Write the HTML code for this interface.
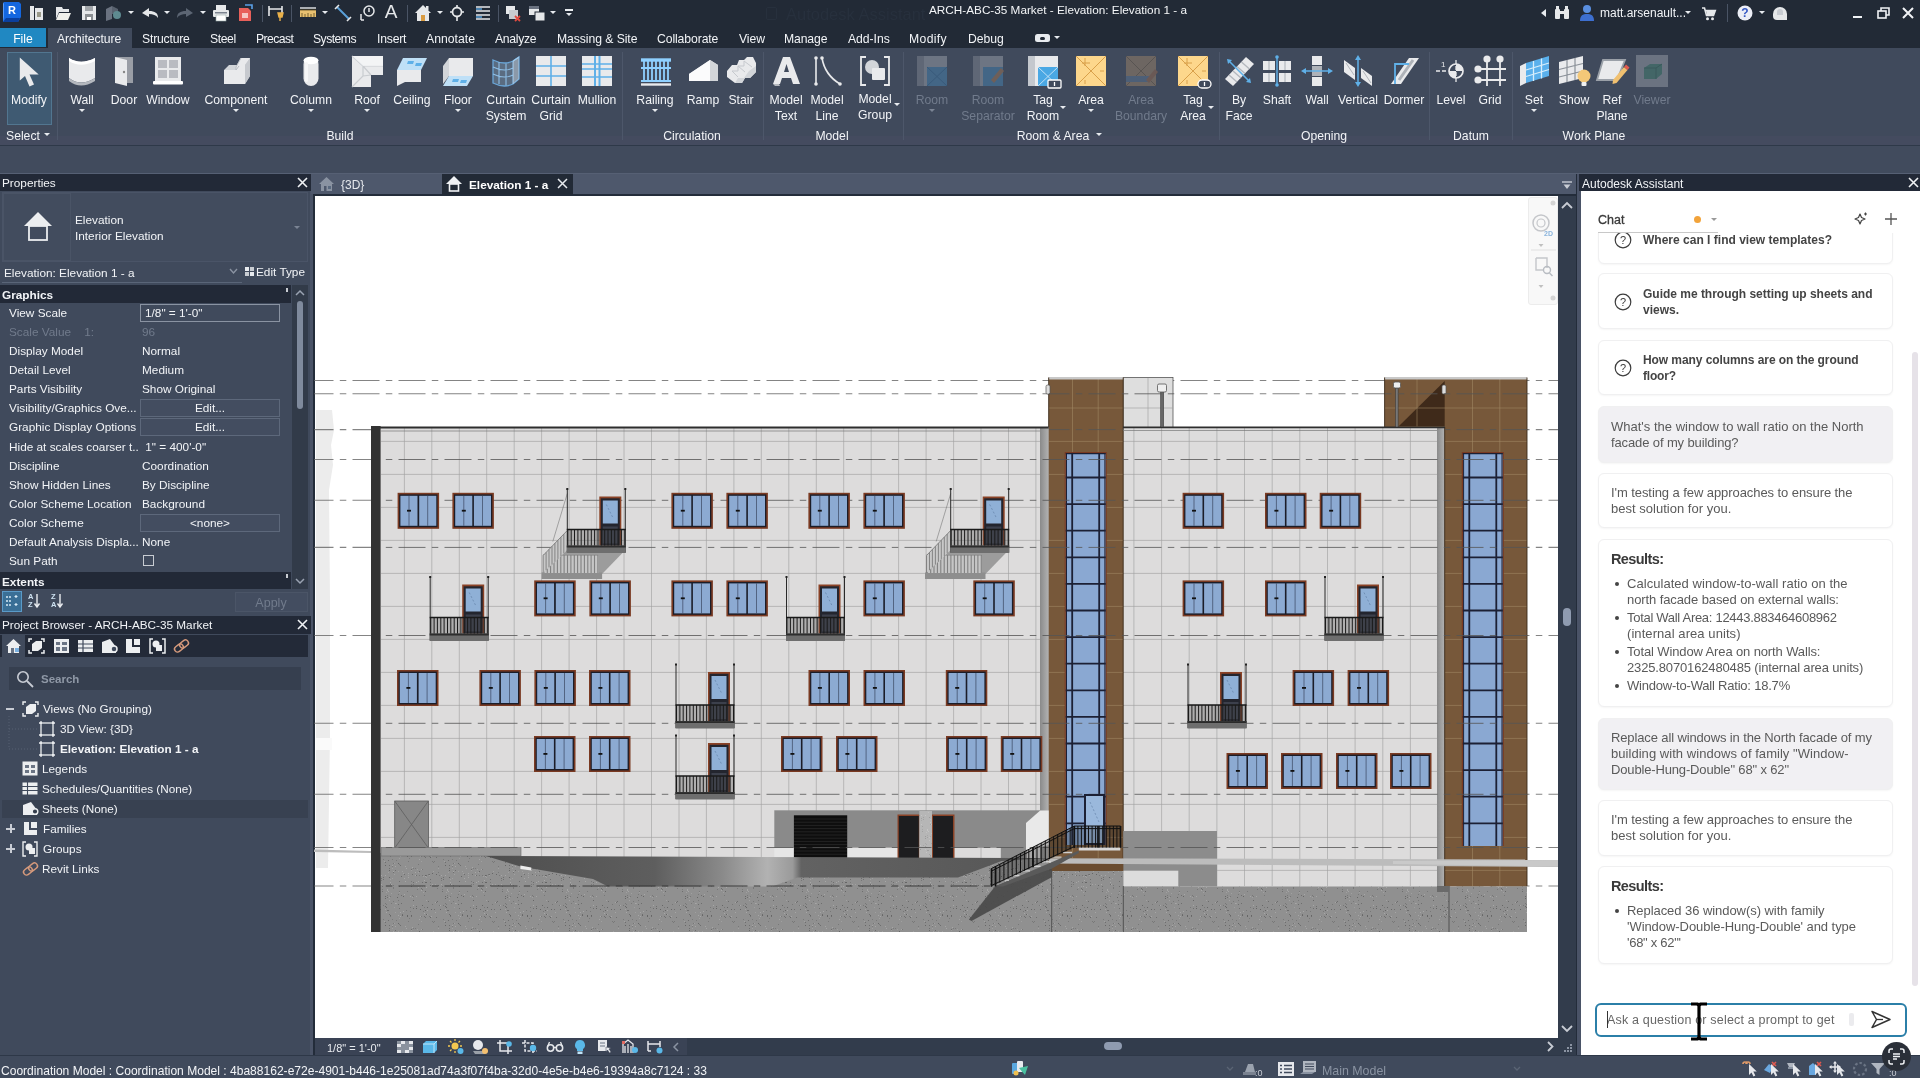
<!DOCTYPE html>
<html lang="en"><head><meta charset="utf-8"><title>ARCH-ABC-35 Market - Elevation: Elevation 1 - a</title><style>
*{box-sizing:border-box;margin:0;padding:0}
html,body{width:1920px;height:1078px;overflow:hidden;background:#404a5c;font-family:"Liberation Sans",sans-serif;font-size:12px;color:#f2f4f7}
.abs,.abs>*{position:absolute}
#app{position:relative;width:1920px;height:1078px;overflow:hidden;will-change:transform}
.t{position:absolute;white-space:nowrap;line-height:14px;height:14px}
.c{transform:translateX(-50%);text-align:center}
.dim{color:#717b8c}
#title{left:0;top:0;width:1920px;height:28px;background:#222a36;position:absolute}
#tabs{left:0;top:28px;width:1920px;height:20px;background:#222a36;position:absolute}
#ribbon{left:0;top:48px;width:1920px;height:98px;background:#404a5c;position:absolute;border-bottom:1.5px solid #2e3949}
#opts{left:0;top:146px;width:1920px;height:28px;background:#414b5d;position:absolute;border-bottom:1px solid #566074}
.sep{position:absolute;top:4px;width:1px;height:88px;background:#4d576a}
.arr{position:absolute;width:0;height:0;border-left:3px solid transparent;border-right:3px solid transparent;border-top:3.5px solid #e8ebef;transform:translateX(-50%)}
.arr.d{border-top-color:#7b8494}
svg{position:absolute;overflow:visible}
.hdr{position:absolute;background:#222937;height:17px}
.row{position:absolute;left:0;width:290px;height:19px}
</style></head><body><div id="app">
<div id="title">
<svg style="left:2px;top:1px" width="20" height="22" viewBox="0 0 20 22"><path d="M2 1h15l2 2v13l-3 5H1V3z" fill="#1467e0"/><path d="M1 3l1-2v15l-1 5z" fill="#5a9bf5"/><path d="M1 21l3-4h14l-2 4z" fill="#0b3f9c"/><text x="6" y="13" font-family="Liberation Sans,sans-serif" font-weight="bold" font-size="11" fill="#fff">R</text></svg>
<svg style="left:27px;top:4px" width="18" height="18" viewBox="0 0 18 18"><rect x="3" y="2" width="4" height="14" fill="#e6e8ea"/><rect x="8" y="4" width="8" height="12" fill="#e6e8ea"/><rect x="10" y="8" width="4" height="5" fill="#9a9a8a"/></svg>
<svg style="left:54px;top:4px" width="20" height="18" viewBox="0 0 20 18"><path d="M2 3h6l1 2h6v3H5l-3 7z" fill="#e6e8ea"/><path d="M5 9h12l-3 7H2z" fill="#f0f0ec"/></svg>
<svg style="left:80px;top:4px" width="18" height="18" viewBox="0 0 18 18"><path d="M2 2h14v14H2z" fill="#e6e8ea"/><rect x="5" y="2" width="8" height="5" fill="#a0a4a8"/><rect x="5" y="10" width="8" height="6" fill="#8a8e92"/><rect x="7" y="13" width="4" height="3" fill="#fff"/></svg>
<svg style="left:104px;top:4px" width="18" height="18" viewBox="0 0 18 18"><path d="M2 5l6-3v13l-6 2z" fill="#6a7280"/><path d="M8 2l6 3v5H8z" fill="#58616e"/><circle cx="13" cy="11" r="4" fill="#5e8a90"/></svg>
<div class="arr " style="left:131px;top:11px"></div>
<svg style="left:141px;top:4px" width="18" height="18" viewBox="0 0 18 18"><path d="M1 9l7-5v3c6 0 9 2 9 7-2-3-5-4-9-4v3z" fill="#e6e8ea"/></svg>
<div class="arr " style="left:167px;top:11px"></div>
<svg style="left:176px;top:4px" width="18" height="18" viewBox="0 0 18 18"><path d="M17 9l-7-5v3c-6 0-9 2-9 7 2-3 5-4 9-4v3z" fill="#5c6573"/></svg>
<div class="arr " style="left:203px;top:11px"></div>
<svg style="left:212px;top:4px" width="18" height="18" viewBox="0 0 18 18"><rect x="4" y="1" width="10" height="5" fill="#e6e8ea"/><rect x="1" y="6" width="16" height="7" rx="1" fill="#e6e8ea"/><rect x="4" y="11" width="10" height="6" fill="#fff" stroke="#9aa" stroke-width=".6"/><rect x="3" y="8" width="12" height="1.5" fill="#7a828e"/></svg>
<svg style="left:236px;top:4px" width="18" height="18" viewBox="0 0 18 18"><path d="M3 4h9l3 3v10H3z" fill="#e8605a"/><rect x="6" y="9" width="6" height="5" fill="#f6c8c4"/><path d="M9 1h7v4" stroke="#5aa0e8" stroke-width="1.6" fill="none"/></svg>
<div style="position:absolute;left:262px;top:5px;width:1px;height:17px;background:#4a5465"></div>
<svg style="left:267px;top:4px" width="18" height="18" viewBox="0 0 18 18"><path d="M2 2v10M15 2v10M2 5h13" stroke="#e6e8ea" stroke-width="1.6" fill="none"/><path d="M11 9h5l-1 4h-3zM13 13v4" stroke="#e8b04a" stroke-width="1.4" fill="#e8b04a"/></svg>
<div style="position:absolute;left:291px;top:5px;width:1px;height:17px;background:#4a5465"></div>
<svg style="left:299px;top:4px" width="18" height="18" viewBox="0 0 18 18"><rect x="1" y="6" width="16" height="7" fill="#e8c070"/><path d="M1 6h16M3 9v4M6 10v3M9 9v4M12 10v3M15 9v4" stroke="#5a4a20" stroke-width=".8"/><path d="M1 4h16" stroke="#e6e8ea" stroke-width="1.4"/></svg>
<div class="arr " style="left:325px;top:11px"></div>
<svg style="left:334px;top:4px" width="18" height="18" viewBox="0 0 18 18"><path d="M3 3l12 12" stroke="#5aa0d8" stroke-width="2"/><path d="M1 5l4-4M13 17l4-4" stroke="#e6e8ea" stroke-width="1.6"/></svg>
<svg style="left:358px;top:4px" width="18" height="18" viewBox="0 0 18 18"><circle cx="11" cy="7" r="5" fill="none" stroke="#e6e8ea" stroke-width="1.5"/><path d="M11 4v4M3 10v6M3 16h3" stroke="#e6e8ea" stroke-width="1.5" fill="none"/></svg>
<div class="t c" style="left:391px;top:1px;font-size:19px;line-height:22px;height:22px;color:#e6e8ea">A</div>
<div style="position:absolute;left:407px;top:5px;width:1px;height:17px;background:#4a5465"></div>
<svg style="left:414px;top:4px" width="18" height="18" viewBox="0 0 18 18"><path d="M1 9l8-8 8 8h-2v8H3V9z" fill="#e6e8ea"/><rect x="7" y="11" width="4" height="6" fill="#d89a40"/><rect x="12" y="2" width="2.5" height="4" fill="#e6e8ea"/></svg>
<div class="arr " style="left:440px;top:11px"></div>
<svg style="left:448px;top:4px" width="18" height="18" viewBox="0 0 18 18"><circle cx="9" cy="8" r="4.5" fill="none" stroke="#e6e8ea" stroke-width="1.8"/><path d="M9 1v3M9 12v5M2 8h3M13 8h3" stroke="#e6e8ea" stroke-width="1.6"/></svg>
<svg style="left:474px;top:4px" width="18" height="18" viewBox="0 0 18 18"><path d="M2 3h14M2 7h14M2 11h14M2 15h14" stroke="#e6e8ea" stroke-width="1.7"/><path d="M2 5h6M2 13h6" stroke="#5aa0d8" stroke-width="1.5"/></svg>
<div style="position:absolute;left:498px;top:5px;width:1px;height:17px;background:#4a5465"></div>
<svg style="left:504px;top:4px" width="18" height="18" viewBox="0 0 18 18"><rect x="2" y="2" width="9" height="8" fill="#e6e8ea"/><rect x="5" y="6" width="9" height="9" fill="#c8ccd0"/><path d="M11 12l5 5M16 12l-5 5" stroke="#e04a40" stroke-width="1.8"/></svg>
<svg style="left:528px;top:4px" width="18" height="18" viewBox="0 0 18 18"><rect x="1" y="2" width="10" height="9" fill="#e6e8ea"/><rect x="7" y="8" width="10" height="9" fill="#e6e8ea" stroke="#222a36" stroke-width="1"/><rect x="1" y="2" width="10" height="3" fill="#6a7280"/></svg>
<div class="arr " style="left:553px;top:11px"></div>
<div style="position:absolute;left:565px;top:9px;width:8px;height:2px;background:#e8ebef"></div>
<div class="arr " style="left:569px;top:13px"></div>
<div class="t " style="left:786px;top:7px;color:#27303d;font-size:16.5px;line-height:18px;height:18px;margin-top:-2px">Autodesk Assistant</div>
<div style="position:absolute;left:766px;top:7px;width:11px;height:13px;border:1.5px solid #27303d;border-radius:2px"></div>
<div class="t " style="left:929px;top:3px;font-size:11.75px;color:#f4f6f8">ARCH-ABC-35 Market - Elevation: Elevation 1 - a</div>
<div style="position:absolute;left:1541px;top:9px;width:0;height:0;border-top:4px solid transparent;border-bottom:4px solid transparent;border-right:5px solid #e8ebef"></div>
<svg style="left:1553px;top:4px" width="18" height="18" viewBox="0 0 18 18"><rect x="2" y="5" width="5" height="10" rx="1" fill="#e6e8ea"/><rect x="11" y="5" width="5" height="10" rx="1" fill="#e6e8ea"/><rect x="3" y="2" width="3" height="4" fill="#e6e8ea"/><rect x="12" y="2" width="3" height="4" fill="#e6e8ea"/><rect x="7" y="7" width="4" height="3" fill="#e6e8ea"/></svg>
<svg style="left:1578px;top:4px" width="18" height="18" viewBox="0 0 18 18"><circle cx="9" cy="5" r="4" fill="#5a8fe0"/><path d="M2 17c0-6 3-7 7-7s7 1 7 7z" fill="#3d6fd0"/></svg>
<div class="t " style="left:1600px;top:6px;font-size:12px">matt.arsenault...</div>
<div class="arr " style="left:1688px;top:11px"></div>
<svg style="left:1700px;top:4px" width="18" height="18" viewBox="0 0 18 18"><path d="M2 4h2.5l2 7.5h7l1.8-5H5.5" stroke="#e6e8ea" stroke-width="1.6" fill="none"/><circle cx="7.5" cy="14.8" r="1.5" fill="#e6e8ea"/><circle cx="12.5" cy="14.8" r="1.5" fill="#e6e8ea"/><path d="M6 6.5h9l-1.5 4.5H7z" fill="#e6e8ea"/></svg>
<div style="position:absolute;left:1727px;top:4px;width:1px;height:18px;background:#4a5465"></div>
<svg style="left:1737px;top:5px" width="16" height="16" viewBox="0 0 16 16"><circle cx="8" cy="8" r="7.5" fill="#eceef6"/><text x="8" y="12.3" text-anchor="middle" font-family="Liberation Sans,sans-serif" font-weight="bold" font-size="12" fill="#3558c4">?</text></svg>
<div class="arr " style="left:1762px;top:11px"></div>
<svg style="left:1771px;top:4px" width="18" height="18" viewBox="0 0 18 18"><path d="M2 10a7 7 0 0 1 14 0v6H6a4 4 0 0 1-4-4z" fill="#e6e8ea"/><path d="M6 8a3 3 0 0 1 6 0v3H6z" fill="#c8ccd2"/></svg>
<div style="position:absolute;left:1853px;top:16px;width:9px;height:2px;background:#f0f2f5"></div>
<svg style="left:1877px;top:7px" width="13" height="12" viewBox="0 0 13 12"><rect x="1" y="4" width="8" height="7" fill="none" stroke="#f0f2f5" stroke-width="1.6"/><path d="M4 4V1h8v7H9" fill="none" stroke="#f0f2f5" stroke-width="1.6"/></svg>
<svg style="left:1902px;top:7px" width="12" height="12" viewBox="0 0 12 12"><path d="M1 1l10 10M11 1L1 11" stroke="#f0f2f5" stroke-width="2"/></svg>
</div>
<div id="tabs">
<div style="position:absolute;left:0;top:0;width:46px;height:19px;background:#2088c2"></div>
<div class="t c " style="left:23px;top:4px;font-size:12.2px;color:#fff">File</div>
<div style="position:absolute;left:48px;top:0;width:84px;height:20px;background:#404a5c"></div>
<div class="t " style="left:57px;top:4px;font-size:12.2px;letter-spacing:-0.061px;">Architecture</div>
<div class="t " style="left:142px;top:4px;font-size:12.2px;letter-spacing:-0.194px;">Structure</div>
<div class="t " style="left:210px;top:4px;font-size:12.2px;letter-spacing:-0.416px;">Steel</div>
<div class="t " style="left:256px;top:4px;font-size:12.2px;letter-spacing:-0.56px;">Precast</div>
<div class="t " style="left:313px;top:4px;font-size:12.2px;letter-spacing:-0.532px;">Systems</div>
<div class="t " style="left:377px;top:4px;font-size:12.2px;letter-spacing:-0.197px;">Insert</div>
<div class="t " style="left:426px;top:4px;font-size:12.2px;letter-spacing:0.026px;">Annotate</div>
<div class="t " style="left:495px;top:4px;font-size:12.2px;letter-spacing:-0.294px;">Analyze</div>
<div class="t " style="left:557px;top:4px;font-size:12.2px;letter-spacing:-0.063px;">Massing &amp; Site</div>
<div class="t " style="left:657px;top:4px;font-size:12.2px;letter-spacing:-0.094px;">Collaborate</div>
<div class="t " style="left:739px;top:4px;font-size:12.2px;letter-spacing:-0.049px;">View</div>
<div class="t " style="left:784px;top:4px;font-size:12.2px;letter-spacing:-0.124px;">Manage</div>
<div class="t " style="left:848px;top:4px;font-size:12.2px;letter-spacing:-0.043px;">Add-Ins</div>
<div class="t " style="left:909px;top:4px;font-size:12.2px;letter-spacing:0.351px;">Modify</div>
<div class="t " style="left:968px;top:4px;font-size:12.2px;letter-spacing:-0.043px;">Debug</div>
<div style="position:absolute;left:1035px;top:6px;width:15px;height:8px;border-radius:2.5px;background:#e8ebef"></div><div style="position:absolute;left:1040px;top:8.5px;width:5px;height:3px;border-radius:1.5px;background:#222a36"></div>
<div class="arr " style="left:1057px;top:8px"></div>
</div>
<div id="ribbon">
<div style="position:absolute;left:0;top:88px;width:1920px;height:9px;background:#444b5f"></div>
<div style="position:absolute;left:7px;top:4px;width:45px;height:73px;background:#3f5a72;border:1px solid #527690"></div>
<div class="sep" style="left:57px"></div>
<div class="sep" style="left:622px"></div>
<div class="sep" style="left:763px"></div>
<div class="sep" style="left:903px"></div>
<div class="sep" style="left:1219px"></div>
<div class="sep" style="left:1429px"></div>
<div class="sep" style="left:1512px"></div>
<svg style="left:12px;top:6px" width="34" height="34" viewBox="0 0 34 34"><path d="M7.8 3.5V26.6L13 22l4.5 10.5 4.5-2-4.5-10h9.2z" fill="#e9eaec"/></svg>
<div class="t c " style="left:29px;top:45px;font-size:12.2px">Modify</div>
<svg style="left:65px;top:6px" width="34" height="34" viewBox="0 0 34 34"><path d="M4 4c8 5 16 5 26 0v20c-10 6-18 6-26 0z" fill="#e9eaec"/><path d="M4 4c8 5 16 5 26 0l0 3c-10 5-18 5-26 0z" fill="#fff"/><path d="M4 24c8 6 16 6 26 0v3c-10 6-18 6-26 0z" fill="#b4b8be"/></svg>
<div class="t c " style="left:82px;top:45px;font-size:12.2px">Wall</div>
<div class="arr " style="left:82px;top:61px"></div>
<svg style="left:107px;top:6px" width="34" height="34" viewBox="0 0 34 34"><path d="M8 3h18v26H8z" fill="#9a9ea6"/><path d="M8 3l12 3v26L8 29z" fill="#e9eaec"/><circle cx="17" cy="18" r="1.2" fill="#888"/></svg>
<div class="t c " style="left:124px;top:45px;font-size:12.2px">Door</div>
<svg style="left:151px;top:6px" width="34" height="34" viewBox="0 0 34 34"><rect x="4" y="3" width="26" height="24" fill="#e9eaec"/><rect x="7" y="6" width="9" height="8" fill="#b9bbc1"/><rect x="18" y="6" width="9" height="8" fill="#b9bbc1"/><rect x="7" y="16" width="9" height="8" fill="#b9bbc1"/><rect x="18" y="16" width="9" height="8" fill="#b9bbc1"/><rect x="2" y="27" width="30" height="3.5" rx="1" fill="#fff"/></svg>
<div class="t c " style="left:168px;top:45px;font-size:12.2px">Window</div>
<svg style="left:219px;top:6px" width="34" height="34" viewBox="0 0 34 34"><path d="M5 16l5-5h8l4-7h9v18l-5 8H5z" fill="#d2d5d9"/><path d="M5 16h12v-3l5-9h9l-5 7v19H5z" fill="#e9eaec"/><path d="M17 16v-3l5-9M17 16l3-4" stroke="#b9bdc3" stroke-width="1" fill="none"/><path d="M26 11l5-7v18l-5 8z" fill="#c6c9ce"/></svg>
<div class="t c " style="left:236px;top:45px;font-size:12.2px">Component</div>
<div class="arr " style="left:236px;top:61px"></div>
<svg style="left:294px;top:6px" width="34" height="34" viewBox="0 0 34 34"><rect x="9.5" y="3" width="15" height="29" rx="7.5" fill="#e9eaec"/><ellipse cx="17" cy="6.5" rx="7.5" ry="3.8" fill="#fff"/><rect x="11" y="8" width="3" height="20" rx="1.5" fill="#f6f6f7"/></svg>
<div class="t c " style="left:311px;top:45px;font-size:12.2px">Column</div>
<div class="arr " style="left:311px;top:61px"></div>
<svg style="left:350px;top:6px" width="34" height="34" viewBox="0 0 34 34"><path d="M2 2h31v19H21v12H2z" fill="#e9eaec"/><path d="M2 33L13 22V12L2 2M13 12h20M13 22l8-1M13 12l8 9" stroke="#c9ccd0" stroke-width="1.2" fill="none"/><path d="M13 12h20V2H2z" fill="#f7f8f9" opacity=".7"/></svg>
<div class="t c " style="left:367px;top:45px;font-size:12.2px">Roof</div>
<div class="arr " style="left:367px;top:61px"></div>
<svg style="left:395px;top:6px" width="34" height="34" viewBox="0 0 34 34"><path d="M8 4h24l-6 12H2z" fill="#bfe0f7"/><path d="M13 7h6l-1 3h-6zM21 9h6l-1 3h-6z" fill="#5fb0e8"/><path d="M2 16h24v12H10l-8 4z" fill="#e9eaec"/></svg>
<div class="t c " style="left:412px;top:45px;font-size:12.2px">Ceiling</div>
<svg style="left:441px;top:6px" width="34" height="34" viewBox="0 0 34 34"><path d="M8 4h24v18H8z" fill="#e9eaec"/><path d="M8 4L2 12v18l6-8z" fill="#d2d5d9"/><path d="M8 22h24l-6 10H2z" fill="#bfe0f7"/><path d="M12 25h6l-1 3h-6zM20 26h6l-1 3h-6z" fill="#5fb0e8"/></svg>
<div class="t c " style="left:458px;top:45px;font-size:12.2px">Floor</div>
<div class="arr " style="left:458px;top:61px"></div>
<svg style="left:489px;top:6px" width="34" height="34" viewBox="0 0 34 34"><path d="M4 6c8 4 14 4 20 1l6-4v22l-6 5c-6 3-12 3-20-1z" fill="#9fc4e4" fill-opacity=".28" stroke="#6aa6d8" stroke-width="1.3"/><path d="M4 13c8 4 14 4 20 1M4 20c8 4 14 4 20 1M10 8v22M17 9.5v22M24 7v23M24 7l6-4" stroke="#8fc0e8" stroke-width="1.1" fill="none"/><path d="M24 7l6-4v22l-6 5z" fill="#e8eef4" fill-opacity=".35"/></svg>
<div class="t c " style="left:506px;top:45px;font-size:12.2px">Curtain</div>
<div class="t c " style="left:506px;top:61px;font-size:12.2px">System</div>
<svg style="left:534px;top:6px" width="34" height="34" viewBox="0 0 34 34"><rect x="2" y="2" width="30" height="30" fill="#e9eaec"/><path d="M2 12h30M2 22h30M17 2v30" stroke="#5fb0e8" stroke-width="1.6"/></svg>
<div class="t c " style="left:551px;top:45px;font-size:12.2px">Curtain</div>
<div class="t c " style="left:551px;top:61px;font-size:12.2px">Grid</div>
<svg style="left:580px;top:6px" width="34" height="34" viewBox="0 0 34 34"><rect x="2" y="2" width="30" height="30" fill="#e9eaec"/><path d="M15 2v30M19.5 2v30" stroke="#5fb0e8" stroke-width="2"/><path d="M2 10h30M2 15h30M2 23h30" stroke="#5fb0e8" stroke-width="1.5"/></svg>
<div class="t c " style="left:597px;top:45px;font-size:12.2px">Mullion</div>
<svg style="left:638px;top:6px" width="34" height="34" viewBox="0 0 34 34"><path d="M3 6h30" stroke="#8fd0ff" stroke-width="3.4"/><path d="M3 14h30M3 27h30" stroke="#8fd0ff" stroke-width="2"/><path d="M6 7v20M10 7v20M14 7v20M18 7v20M22 7v20M26 7v20M30 7v20" stroke="#8fd0ff" stroke-width="1.8"/><path d="M3 30.5h30" stroke="#e9eaec" stroke-width="2.4"/></svg>
<div class="t c " style="left:655px;top:45px;font-size:12.2px">Railing</div>
<div class="arr " style="left:655px;top:61px"></div>
<svg style="left:686px;top:6px" width="34" height="34" viewBox="0 0 34 34"><path d="M3 20L24 6l8 5v16H3z" fill="#e9eaec"/><path d="M3 20L24 6v21H3z" fill="#fbfbfc"/><path d="M24 6l8 5v16h-8z" fill="#d2d5d9"/></svg>
<div class="t c " style="left:703px;top:45px;font-size:12.2px">Ramp</div>
<svg style="left:724px;top:6px" width="34" height="34" viewBox="0 0 34 34"><path d="M3 17l5-6h5l2-5h5l3-3h6l3 6v9l-6 6h-5l-3 5h-7l-8-6z" fill="#e9eaec"/><path d="M8 17h6v-5h6V7M8 17l6 6M14 12l7 6M20 7l8 6" stroke="#c6c9ce" stroke-width="1" fill="none"/><path d="M11 29l3-5h6l5-7 7-5v6l-6 6h-5l-3 5z" fill="#d2d5d9"/></svg>
<div class="t c " style="left:741px;top:45px;font-size:12.2px">Stair</div>
<svg style="left:769px;top:6px" width="34" height="34" viewBox="0 0 34 34"><path d="M4 30L14 3h7l10 27h-7l-2-6h-9l-2 6zM15 18h5l-2.5-8z" fill="#e9eaec"/><path d="M4 30l2 2h5l-1-2z" fill="#b4b8be"/></svg>
<div class="t c " style="left:786px;top:45px;font-size:12.2px">Model</div>
<div class="t c " style="left:786px;top:61px;font-size:12.2px">Text</div>
<svg style="left:810px;top:6px" width="34" height="34" viewBox="0 0 34 34"><path d="M6 5v24" stroke="#e9eaec" stroke-width="1.6"/><path d="M12 4c2 12 8 20 18 26" stroke="#e9eaec" stroke-width="1.6" fill="none"/><circle cx="6" cy="4" r="1.8" fill="#e9eaec"/><circle cx="6" cy="30" r="1.8" fill="#e9eaec"/><circle cx="12" cy="4" r="1.8" fill="#e9eaec"/><circle cx="30" cy="30" r="1.8" fill="#e9eaec"/></svg>
<div class="t c " style="left:827px;top:45px;font-size:12.2px">Model</div>
<div class="t c " style="left:827px;top:61px;font-size:12.2px">Line</div>
<svg style="left:858px;top:6px" width="34" height="34" viewBox="0 0 34 34"><path d="M8 3H3v28h5M26 3h5v28h-5" stroke="#e9eaec" stroke-width="1.8" fill="none"/><circle cx="14" cy="13" r="7" fill="#d2d5d9"/><rect x="14" y="14" width="13" height="12" rx="1" fill="#e9eaec"/></svg>
<div class="t c " style="left:875px;top:44px;font-size:12.2px">Model</div>
<div class="t c " style="left:875px;top:60px;font-size:12.2px">Group</div>
<div class="arr " style="left:897px;top:55px"></div>
<svg style="left:915px;top:6px" width="34" height="34" viewBox="0 0 34 34" opacity=".33"><rect x="2" y="2" width="30" height="30" fill="#c8ccd2"/><rect x="2" y="2" width="7" height="30" fill="#9ea3ab"/><rect x="12" y="13" width="20" height="19" fill="#4aa0dc"/><path d="M12 13l20 19M32 13L12 32" stroke="#2a7ab8" stroke-width="1"/></svg>
<div class="t c dim" style="left:932px;top:45px;font-size:12.2px">Room</div>
<div class="arr d" style="left:932px;top:61px"></div>
<svg style="left:971px;top:6px" width="34" height="34" viewBox="0 0 34 34" opacity=".33"><rect x="2" y="2" width="30" height="30" fill="#c8ccd2"/><rect x="2" y="2" width="7" height="30" fill="#9ea3ab"/><rect x="12" y="13" width="20" height="19" fill="#4aa0dc"/><path d="M20 26l10-12 3 3-10 12z" fill="#d08a50"/></svg>
<div class="t c dim" style="left:988px;top:45px;font-size:12.2px">Room</div>
<div class="t c dim" style="left:988px;top:61px;font-size:12.2px">Separator</div>
<svg style="left:1026px;top:6px" width="34" height="34" viewBox="0 0 34 34"><rect x="2" y="2" width="30" height="30" fill="#e9eaec"/><rect x="2" y="2" width="7" height="30" fill="#c4c8ce"/><rect x="12" y="13" width="20" height="19" fill="#4aa8e4"/><path d="M12 13l20 19M32 13L12 32" stroke="#bfe0f7" stroke-width="1"/><rect x="22" y="26" width="13" height="8" rx="1" fill="#404a5c" stroke="#fff" stroke-width="1.3"/><path d="M28.5 28v4" stroke="#fff" stroke-width="1.3"/></svg>
<div class="t c " style="left:1043px;top:45px;font-size:12.2px">Tag</div>
<div class="t c " style="left:1043px;top:61px;font-size:12.2px">Room</div>
<div class="arr " style="left:1063px;top:58px"></div>
<svg style="left:1074px;top:6px" width="34" height="34" viewBox="0 0 34 34"><rect x="2" y="2" width="30" height="30" fill="#fdd78c"/><path d="M2 2l30 30M32 2L2 32M11 4v8M8 9h8M11 26v4M26 17h4" stroke="#d9a04a" stroke-width="1" fill="none"/></svg>
<div class="t c " style="left:1091px;top:45px;font-size:12.2px">Area</div>
<div class="arr " style="left:1091px;top:61px"></div>
<svg style="left:1124px;top:6px" width="34" height="34" viewBox="0 0 34 34" opacity=".33"><rect x="2" y="2" width="30" height="30" fill="#c8a070"/><path d="M2 2l30 30M32 2L2 32" stroke="#8a6a40" stroke-width="1"/><rect x="2" y="22" width="24" height="6" fill="#6a8ab0"/><path d="M22 26l9-11 3 3-9 11z" fill="#c07848"/></svg>
<div class="t c dim" style="left:1141px;top:45px;font-size:12.2px">Area</div>
<div class="t c dim" style="left:1141px;top:61px;font-size:12.2px">Boundary</div>
<svg style="left:1176px;top:6px" width="34" height="34" viewBox="0 0 34 34"><rect x="2" y="2" width="30" height="30" fill="#fdd78c"/><path d="M2 2l30 30M32 2L2 32M11 4v8M8 9h8M11 26v4M26 17h4" stroke="#d9a04a" stroke-width="1" fill="none"/><rect x="22" y="26" width="13" height="8" rx="4" fill="#404a5c" stroke="#fff" stroke-width="1.3"/><path d="M28.5 28v4" stroke="#fff" stroke-width="1.3"/></svg>
<div class="t c " style="left:1193px;top:45px;font-size:12.2px">Tag</div>
<div class="t c " style="left:1193px;top:61px;font-size:12.2px">Area</div>
<div class="arr " style="left:1211px;top:58px"></div>
<svg style="left:1222px;top:6px" width="34" height="34" viewBox="0 0 34 34"><path d="M3 25L24 3l8 7L11 32z" fill="#e9eaec"/><path d="M7 21l8 7M11 17l8 7M15 12.5l8 7M19.5 8l8 7" stroke="#b4b8be" stroke-width="1.4"/><path d="M7 7l20 20" stroke="#5fb0e8" stroke-width="1.6"/><path d="M5 5l5 1-4 4zM29 29l-5-1 4-4z" fill="#5fb0e8"/></svg>
<div class="t c " style="left:1239px;top:45px;font-size:12.2px">By</div>
<div class="t c " style="left:1239px;top:61px;font-size:12.2px">Face</div>
<svg style="left:1260px;top:6px" width="34" height="34" viewBox="0 0 34 34"><rect x="3" y="7" width="12" height="9" fill="#e9eaec"/><rect x="19" y="7" width="12" height="9" fill="#e9eaec"/><rect x="3" y="19" width="12" height="9" fill="#e9eaec"/><rect x="19" y="19" width="12" height="9" fill="#e9eaec"/><path d="M9 7v9M25 7v9M9 19v9M25 19v9" stroke="#b4b8be" stroke-width="1.2"/><path d="M17 3v28" stroke="#5fb0e8" stroke-width="1.4"/><circle cx="17" cy="3" r="1.8" fill="#5fb0e8"/><circle cx="17" cy="31" r="1.8" fill="#5fb0e8"/></svg>
<div class="t c " style="left:1277px;top:45px;font-size:12.2px">Shaft</div>
<svg style="left:1300px;top:6px" width="34" height="34" viewBox="0 0 34 34"><rect x="12" y="2" width="10" height="9" fill="#e9eaec"/><rect x="12" y="23" width="10" height="9" fill="#e9eaec"/><rect x="12" y="12" width="10" height="10" fill="#aeb2b8"/><path d="M3 17h28" stroke="#5fb0e8" stroke-width="1.5"/><path d="M1 17l5-3v6zM33 17l-5-3v6z" fill="#5fb0e8"/></svg>
<div class="t c " style="left:1317px;top:45px;font-size:12.2px">Wall</div>
<svg style="left:1341px;top:6px" width="34" height="34" viewBox="0 0 34 34"><path d="M3 6l11 8v12L3 18z" fill="#e9eaec"/><path d="M20 14l11 8v10l-11-8z" fill="#e9eaec"/><path d="M5 9l8 12M22 17l8 12" stroke="#b0b4ba" stroke-width="1"/><path d="M17 3v28" stroke="#5fb0e8" stroke-width="1.5"/><path d="M17 1l-3 5h6zM17 33l-3-5h6z" fill="#5fb0e8"/></svg>
<div class="t c " style="left:1358px;top:45px;font-size:12.2px">Vertical</div>
<svg style="left:1387px;top:6px" width="34" height="34" viewBox="0 0 34 34"><path d="M4 30L22 4h10L14 30z" fill="#e9eaec"/><path d="M12 26L26 6" stroke="#aeb2b8" stroke-width="3"/><path d="M8 30V10h14" stroke="#5fb0e8" stroke-width="1.8" fill="none"/></svg>
<div class="t c " style="left:1404px;top:45px;font-size:12.2px">Dormer</div>
<svg style="left:1434px;top:6px" width="34" height="34" viewBox="0 0 34 34"><circle cx="22" cy="17" r="7" fill="none" stroke="#e9eaec" stroke-width="1.7"/><path d="M22 10a7 7 0 0 1 7 7h-7zM22 24a7 7 0 0 1-7-7h7z" fill="#e9eaec"/><path d="M2 17h12M22 6v22" stroke="#e9eaec" stroke-width="1.3" stroke-dasharray="4 2"/><text x="7" y="13" font-size="8" fill="#e9eaec" font-family="Liberation Sans,sans-serif">1</text></svg>
<div class="t c " style="left:1451px;top:45px;font-size:12.2px">Level</div>
<svg style="left:1473px;top:6px" width="34" height="34" viewBox="0 0 34 34"><path d="M14 8v24M27 8v24M8 15h25M8 26h25" stroke="#e9eaec" stroke-width="1.8"/><circle cx="14" cy="5" r="3.6" fill="#e9eaec"/><circle cx="27" cy="5" r="3.6" fill="#e9eaec"/><circle cx="5" cy="15" r="3.6" fill="#e9eaec"/><circle cx="5" cy="26" r="3.6" fill="#e9eaec"/></svg>
<div class="t c " style="left:1490px;top:45px;font-size:12.2px">Grid</div>
<svg style="left:1517px;top:6px" width="34" height="34" viewBox="0 0 34 34"><path d="M3 12l6-3v20l-6 3z" fill="#e9eaec"/><path d="M9 9l23-7v20L9 29z" fill="#5ab0ec"/><path d="M9 16l23-7M9 22.5l23-7M16.5 7v20M24.5 4.5v20" stroke="#d8eefb" stroke-width="1.3"/></svg>
<div class="t c " style="left:1534px;top:45px;font-size:12.2px">Set</div>
<div class="arr " style="left:1534px;top:61px"></div>
<svg style="left:1557px;top:6px" width="34" height="34" viewBox="0 0 34 34"><path d="M2 8l24-6v22L2 30z" fill="#e9eaec"/><path d="M2 15.5l24-6M2 23l24-6M10 6v22M18 4v22" stroke="#8a9098" stroke-width="1.2"/><circle cx="27" cy="22" r="6.5" fill="#f4c878"/><rect x="24.5" y="28" width="5" height="4" rx="1" fill="#f0f0f0"/></svg>
<div class="t c " style="left:1574px;top:45px;font-size:12.2px">Show</div>
<svg style="left:1595px;top:6px" width="34" height="34" viewBox="0 0 34 34"><path d="M8 6h22L22 26H2z" fill="#e9eaec" stroke="#9aa0a8" stroke-width="1.8"/><path d="M18 26l11-13 3.5 3-11 13-4 1z" fill="#f0c070"/><path d="M29 13l2-2.5 3.5 3-2 2.5z" fill="#e05a50"/></svg>
<div class="t c " style="left:1612px;top:45px;font-size:12.2px">Ref</div>
<div class="t c " style="left:1612px;top:61px;font-size:12.2px">Plane</div>
<svg style="left:1635px;top:6px" width="34" height="34" viewBox="0 0 34 34" opacity=".33"><rect x="1" y="1" width="32" height="32" fill="#c4c8ce"/><path d="M9 14l6-4h12v10l-6 5H9z" fill="#4aa080"/><path d="M9 14h12l6-4M21 14v11" stroke="#2a7858" stroke-width="1" fill="none"/></svg>
<div class="t c dim" style="left:1652px;top:45px;font-size:12.2px">Viewer</div>
<div class="t " style="left:6px;top:81px;font-size:12.2px">Select</div>
<div class="arr " style="left:47px;top:85px"></div>
<div class="t c " style="left:340px;top:81px;font-size:12.2px">Build</div>
<div class="t c " style="left:692px;top:81px;font-size:12.2px">Circulation</div>
<div class="t c " style="left:832px;top:81px;font-size:12.2px">Model</div>
<div class="t c " style="left:1324px;top:81px;font-size:12.2px">Opening</div>
<div class="t c " style="left:1471px;top:81px;font-size:12.2px">Datum</div>
<div class="t c " style="left:1594px;top:81px;font-size:12.2px">Work Plane</div>
<div class="t c " style="left:1053px;top:81px;font-size:12.2px">Room &amp; Area</div>
<div class="arr " style="left:1099px;top:85px"></div>
</div><div id="opts"></div>
<div style="position:absolute;left:309px;top:174px;width:1272px;height:882px;background:#4a5367"></div>
<div style="position:absolute;left:312.5px;top:174px;width:1264px;height:882px;background:#232c3a"></div>
<div style="position:absolute;left:1558px;top:196px;width:18.3px;height:860px;background:#323c4c"></div>
<div style="position:absolute;left:314.5px;top:1038px;width:1243.5px;height:18px;background:#323c4c"></div>
<div style="position:absolute;left:314.5px;top:1038px;width:372px;height:18px;background:#3a4355"></div>
<div style="position:absolute;left:311px;top:174px;width:1265.3px;height:20px;background:#4e586c"></div>
<div style="position:absolute;left:441.5px;top:174px;width:131px;height:21px;background:#222a36"></div>
<svg style="left:319px;top:177px" width="15" height="14" viewBox="0 0 15 14"><path d="M0 7l7.5-7 7.5 7h-2v7H2V7z" fill="#8a93a2"/><rect x="5" y="9" width="2.5" height="5" fill="#4e586c"/><rect x="9" y="9" width="3" height="3" fill="#5a6a80"/></svg>
<div class="t " style="left:341px;top:177.5px;color:#e4e7eb">{3D}</div>
<svg style="left:446px;top:176px" width="16" height="16" viewBox="0 0 16 16"><path d="M8 0L0 8h16z" fill="#f0f2f5"/><rect x="3.5" y="8" width="9" height="7" fill="none" stroke="#f0f2f5" stroke-width="1.6"/></svg>
<div class="t " style="left:469px;top:178px;font-size:11.8px;color:#fff"><b>Elevation 1 - a</b></div>
<svg style="left:557px;top:178px" width="11" height="11" viewBox="0 0 11 11"><path d="M1 1l9 9M10 1L1 10" stroke="#e8ebef" stroke-width="1.5"/></svg>
<svg style="left:1562px;top:181px" width="10" height="8" viewBox="0 0 10 8"><path d="M0 1h10" stroke="#c8ccd4" stroke-width="1.4"/><path d="M1.5 3.5h7L5 8z" fill="#c8ccd4"/></svg>
<div style="position:absolute;left:314.5px;top:195.5px;width:1243.5px;height:842px;background:#fff"></div>
<svg style="left:314px;top:196px" width="1244" height="841" viewBox="314 196 1244 841">
<defs><pattern id="conc" width="60" height="60" patternUnits="userSpaceOnUse"><rect width="60" height="60" fill="#909090"/><rect x="20" y="9" width="1" height="1" fill="#666"/><rect x="41" y="3" width="1" height="1" fill="#6e6e6e"/><rect x="52" y="34" width="1" height="1" fill="#6e6e6e"/><rect x="23" y="37" width="1" height="1" fill="#6e6e6e"/><rect x="58" y="32" width="1" height="1" fill="#787878"/><rect x="2" y="5" width="1" height="1" fill="#666"/><rect x="26" y="4" width="1" height="1" fill="#787878"/><rect x="5" y="35" width="1" height="1" fill="#666"/><rect x="3" y="52" width="1" height="1" fill="#a0a0a0"/><rect x="7" y="14" width="1" height="1" fill="#a0a0a0"/><rect x="3" y="36" width="1" height="1" fill="#a0a0a0"/><rect x="25" y="3" width="1" height="1" fill="#787878"/><rect x="2" y="35" width="1" height="1" fill="#787878"/><rect x="18" y="26" width="1" height="1" fill="#787878"/><rect x="34" y="7" width="1" height="1" fill="#a0a0a0"/><rect x="19" y="35" width="1" height="1" fill="#787878"/><rect x="6" y="37" width="1" height="1" fill="#a0a0a0"/><rect x="40" y="12" width="1" height="1" fill="#a6a6a6"/><rect x="6" y="35" width="1" height="1" fill="#6e6e6e"/><rect x="36" y="3" width="1" height="1" fill="#a0a0a0"/><rect x="13" y="31" width="1" height="1" fill="#a0a0a0"/><rect x="27" y="49" width="1" height="1" fill="#a6a6a6"/><rect x="29" y="37" width="1" height="1" fill="#666"/><rect x="23" y="19" width="1" height="1" fill="#787878"/><rect x="50" y="11" width="1" height="1" fill="#787878"/><rect x="5" y="36" width="1" height="1" fill="#a6a6a6"/><rect x="33" y="31" width="1" height="1" fill="#a6a6a6"/><rect x="46" y="28" width="1" height="1" fill="#a6a6a6"/><rect x="38" y="4" width="1" height="1" fill="#6e6e6e"/><rect x="32" y="26" width="1" height="1" fill="#787878"/><rect x="48" y="21" width="1" height="1" fill="#787878"/><rect x="59" y="31" width="1" height="1" fill="#666"/><rect x="2" y="42" width="1" height="1" fill="#6e6e6e"/><rect x="48" y="35" width="1" height="1" fill="#a0a0a0"/><rect x="50" y="56" width="1" height="1" fill="#a6a6a6"/><rect x="21" y="44" width="1" height="1" fill="#a6a6a6"/><rect x="38" y="31" width="1" height="1" fill="#a0a0a0"/><rect x="51" y="29" width="1" height="1" fill="#6e6e6e"/><rect x="53" y="5" width="1" height="1" fill="#a6a6a6"/><rect x="30" y="44" width="1" height="1" fill="#6e6e6e"/><rect x="3" y="46" width="1" height="1" fill="#a6a6a6"/><rect x="41" y="36" width="1" height="1" fill="#666"/><rect x="18" y="45" width="1" height="1" fill="#666"/><rect x="56" y="42" width="1" height="1" fill="#a6a6a6"/><rect x="1" y="29" width="1" height="1" fill="#a6a6a6"/><rect x="10" y="39" width="1" height="1" fill="#6e6e6e"/><rect x="31" y="3" width="1" height="1" fill="#787878"/><rect x="49" y="18" width="1" height="1" fill="#787878"/><rect x="47" y="15" width="1" height="1" fill="#666"/><rect x="25" y="58" width="1" height="1" fill="#666"/><rect x="5" y="10" width="1" height="1" fill="#666"/><rect x="25" y="35" width="1" height="1" fill="#a6a6a6"/><rect x="56" y="8" width="1" height="1" fill="#666"/><rect x="55" y="35" width="1" height="1" fill="#a6a6a6"/><rect x="45" y="26" width="1" height="1" fill="#a6a6a6"/><rect x="43" y="56" width="1" height="1" fill="#666"/><rect x="14" y="9" width="1" height="1" fill="#6e6e6e"/><rect x="11" y="9" width="1" height="1" fill="#787878"/><rect x="42" y="14" width="1" height="1" fill="#6e6e6e"/><rect x="31" y="53" width="1" height="1" fill="#a0a0a0"/><rect x="11" y="16" width="1" height="1" fill="#a6a6a6"/><rect x="0" y="9" width="1" height="1" fill="#666"/><rect x="34" y="23" width="1" height="1" fill="#a0a0a0"/><rect x="36" y="20" width="1" height="1" fill="#787878"/><rect x="44" y="54" width="1" height="1" fill="#a0a0a0"/><rect x="39" y="41" width="1" height="1" fill="#6e6e6e"/><rect x="29" y="57" width="1" height="1" fill="#a0a0a0"/><rect x="25" y="25" width="1" height="1" fill="#666"/><rect x="25" y="6" width="1" height="1" fill="#666"/><rect x="40" y="25" width="1" height="1" fill="#6e6e6e"/><rect x="12" y="4" width="1" height="1" fill="#787878"/><rect x="28" y="10" width="1" height="1" fill="#6e6e6e"/><rect x="21" y="38" width="1" height="1" fill="#6e6e6e"/><rect x="6" y="0" width="1" height="1" fill="#a0a0a0"/><rect x="9" y="34" width="1" height="1" fill="#6e6e6e"/><rect x="23" y="39" width="1" height="1" fill="#6e6e6e"/><rect x="4" y="55" width="1" height="1" fill="#787878"/><rect x="39" y="24" width="1" height="1" fill="#787878"/><rect x="40" y="16" width="1" height="1" fill="#a6a6a6"/><rect x="38" y="23" width="1" height="1" fill="#666"/><rect x="7" y="7" width="1" height="1" fill="#666"/><rect x="29" y="30" width="1" height="1" fill="#666"/><rect x="19" y="5" width="1" height="1" fill="#787878"/><rect x="6" y="47" width="1" height="1" fill="#a6a6a6"/><rect x="47" y="16" width="1" height="1" fill="#666"/><rect x="53" y="44" width="1" height="1" fill="#787878"/><rect x="33" y="1" width="1" height="1" fill="#787878"/><rect x="33" y="23" width="1" height="1" fill="#787878"/><rect x="44" y="34" width="1" height="1" fill="#6e6e6e"/><rect x="48" y="33" width="1" height="1" fill="#a6a6a6"/><rect x="41" y="55" width="1" height="1" fill="#6e6e6e"/><rect x="44" y="54" width="1" height="1" fill="#a6a6a6"/><rect x="33" y="23" width="1" height="1" fill="#787878"/><rect x="22" y="49" width="1" height="1" fill="#787878"/><rect x="34" y="34" width="1" height="1" fill="#a0a0a0"/><rect x="21" y="40" width="1" height="1" fill="#787878"/><rect x="39" y="51" width="1" height="1" fill="#787878"/><rect x="51" y="15" width="1" height="1" fill="#666"/><rect x="47" y="51" width="1" height="1" fill="#787878"/><rect x="12" y="33" width="1" height="1" fill="#666"/><rect x="22" y="46" width="1" height="1" fill="#6e6e6e"/><rect x="1" y="50" width="1" height="1" fill="#a6a6a6"/><rect x="30" y="16" width="1" height="1" fill="#787878"/><rect x="44" y="38" width="1" height="1" fill="#a6a6a6"/><rect x="28" y="51" width="1" height="1" fill="#a6a6a6"/><rect x="23" y="5" width="1" height="1" fill="#787878"/><rect x="6" y="14" width="1" height="1" fill="#666"/><rect x="12" y="21" width="1" height="1" fill="#787878"/><rect x="30" y="39" width="1" height="1" fill="#a0a0a0"/><rect x="53" y="0" width="1" height="1" fill="#666"/><rect x="58" y="41" width="1" height="1" fill="#a6a6a6"/><rect x="51" y="41" width="1" height="1" fill="#6e6e6e"/><rect x="53" y="42" width="1" height="1" fill="#6e6e6e"/><rect x="58" y="24" width="1" height="1" fill="#787878"/><rect x="30" y="56" width="1" height="1" fill="#787878"/><rect x="27" y="50" width="1" height="1" fill="#a6a6a6"/><rect x="5" y="51" width="1" height="1" fill="#666"/><rect x="29" y="25" width="1" height="1" fill="#6e6e6e"/><rect x="46" y="10" width="1" height="1" fill="#787878"/><rect x="8" y="1" width="1" height="1" fill="#787878"/><rect x="37" y="57" width="1" height="1" fill="#666"/><rect x="51" y="41" width="1" height="1" fill="#787878"/><rect x="39" y="52" width="1" height="1" fill="#a0a0a0"/><rect x="30" y="42" width="1" height="1" fill="#a6a6a6"/><rect x="9" y="35" width="1" height="1" fill="#a0a0a0"/><rect x="8" y="1" width="1" height="1" fill="#6e6e6e"/><rect x="51" y="46" width="1" height="1" fill="#6e6e6e"/><rect x="33" y="47" width="1" height="1" fill="#787878"/><rect x="27" y="55" width="1" height="1" fill="#787878"/><rect x="52" y="55" width="1" height="1" fill="#787878"/><rect x="1" y="16" width="1" height="1" fill="#787878"/><rect x="18" y="32" width="1" height="1" fill="#787878"/><rect x="48" y="37" width="1" height="1" fill="#a6a6a6"/><rect x="16" y="34" width="1" height="1" fill="#666"/><rect x="53" y="8" width="1" height="1" fill="#6e6e6e"/><rect x="58" y="47" width="1" height="1" fill="#a6a6a6"/><rect x="57" y="29" width="1" height="1" fill="#a0a0a0"/><rect x="52" y="57" width="1" height="1" fill="#a0a0a0"/><rect x="26" y="52" width="1" height="1" fill="#a0a0a0"/><rect x="8" y="34" width="1" height="1" fill="#787878"/><rect x="33" y="32" width="1" height="1" fill="#6e6e6e"/><rect x="55" y="28" width="1" height="1" fill="#787878"/><rect x="38" y="0" width="1" height="1" fill="#787878"/><rect x="11" y="9" width="1" height="1" fill="#666"/><rect x="39" y="46" width="1" height="1" fill="#6e6e6e"/><rect x="35" y="3" width="1" height="1" fill="#a6a6a6"/><rect x="43" y="33" width="1" height="1" fill="#a0a0a0"/><rect x="35" y="30" width="1" height="1" fill="#6e6e6e"/><rect x="56" y="35" width="1" height="1" fill="#6e6e6e"/><rect x="15" y="12" width="1" height="1" fill="#a6a6a6"/><rect x="2" y="49" width="1" height="1" fill="#6e6e6e"/><rect x="32" y="28" width="1" height="1" fill="#a0a0a0"/><rect x="1" y="48" width="1" height="1" fill="#6e6e6e"/><rect x="28" y="20" width="1" height="1" fill="#a0a0a0"/><rect x="32" y="38" width="1" height="1" fill="#a0a0a0"/><rect x="12" y="44" width="1" height="1" fill="#a6a6a6"/><rect x="28" y="32" width="1" height="1" fill="#a0a0a0"/><rect x="51" y="30" width="1" height="1" fill="#a0a0a0"/><rect x="15" y="44" width="1" height="1" fill="#a0a0a0"/><rect x="56" y="56" width="1" height="1" fill="#a6a6a6"/><rect x="59" y="35" width="1" height="1" fill="#787878"/><rect x="53" y="28" width="1" height="1" fill="#787878"/><rect x="26" y="7" width="1" height="1" fill="#666"/><rect x="28" y="20" width="1" height="1" fill="#6e6e6e"/><rect x="42" y="15" width="1" height="1" fill="#666"/><rect x="4" y="13" width="1" height="1" fill="#a6a6a6"/><rect x="50" y="7" width="1" height="1" fill="#787878"/><rect x="45" y="41" width="1" height="1" fill="#a6a6a6"/><rect x="9" y="16" width="1" height="1" fill="#787878"/><rect x="29" y="14" width="1" height="1" fill="#6e6e6e"/><rect x="25" y="56" width="1" height="1" fill="#666"/><rect x="10" y="42" width="1" height="1" fill="#787878"/><rect x="10" y="45" width="1" height="1" fill="#666"/><rect x="32" y="25" width="1" height="1" fill="#a6a6a6"/><rect x="26" y="12" width="1" height="1" fill="#a6a6a6"/><rect x="20" y="5" width="1" height="1" fill="#a6a6a6"/><rect x="1" y="21" width="1" height="1" fill="#a0a0a0"/><rect x="29" y="28" width="1" height="1" fill="#6e6e6e"/><rect x="24" y="21" width="1" height="1" fill="#a0a0a0"/><rect x="39" y="18" width="1" height="1" fill="#a0a0a0"/><rect x="4" y="7" width="1" height="1" fill="#787878"/><rect x="56" y="6" width="1" height="1" fill="#6e6e6e"/><rect x="16" y="17" width="1" height="1" fill="#6e6e6e"/><rect x="57" y="49" width="1" height="1" fill="#787878"/><rect x="17" y="48" width="1" height="1" fill="#787878"/><rect x="52" y="27" width="1" height="1" fill="#a6a6a6"/><rect x="25" y="9" width="1" height="1" fill="#a0a0a0"/><rect x="58" y="32" width="1" height="1" fill="#a0a0a0"/><rect x="31" y="44" width="1" height="1" fill="#a6a6a6"/><rect x="5" y="17" width="1" height="1" fill="#6e6e6e"/><rect x="51" y="44" width="1" height="1" fill="#787878"/><rect x="27" y="57" width="1" height="1" fill="#6e6e6e"/><rect x="17" y="1" width="1" height="1" fill="#6e6e6e"/><rect x="51" y="16" width="1" height="1" fill="#6e6e6e"/><rect x="38" y="54" width="1" height="1" fill="#787878"/><rect x="4" y="16" width="1" height="1" fill="#6e6e6e"/><rect x="29" y="0" width="1" height="1" fill="#a6a6a6"/><rect x="35" y="26" width="1" height="1" fill="#a6a6a6"/><rect x="39" y="8" width="1" height="1" fill="#6e6e6e"/><rect x="33" y="45" width="1" height="1" fill="#787878"/><rect x="7" y="10" width="1" height="1" fill="#a6a6a6"/><rect x="3" y="11" width="1" height="1" fill="#787878"/><rect x="59" y="19" width="1" height="1" fill="#a6a6a6"/><rect x="33" y="48" width="1" height="1" fill="#787878"/><rect x="18" y="28" width="1" height="1" fill="#a0a0a0"/><rect x="43" y="11" width="1" height="1" fill="#a6a6a6"/><rect x="22" y="51" width="1" height="1" fill="#6e6e6e"/><rect x="16" y="2" width="1" height="1" fill="#6e6e6e"/><rect x="1" y="46" width="1" height="1" fill="#a0a0a0"/><rect x="35" y="12" width="1" height="1" fill="#a0a0a0"/><rect x="30" y="15" width="1" height="1" fill="#666"/><rect x="6" y="42" width="1" height="1" fill="#666"/><rect x="42" y="31" width="1" height="1" fill="#a0a0a0"/><rect x="53" y="56" width="1" height="1" fill="#666"/><rect x="32" y="19" width="1" height="1" fill="#787878"/><rect x="14" y="21" width="1" height="1" fill="#787878"/><rect x="53" y="56" width="1" height="1" fill="#787878"/><rect x="25" y="22" width="1" height="1" fill="#6e6e6e"/><rect x="53" y="8" width="1" height="1" fill="#6e6e6e"/><rect x="4" y="40" width="1" height="1" fill="#a6a6a6"/><rect x="27" y="10" width="1" height="1" fill="#6e6e6e"/><rect x="5" y="42" width="1" height="1" fill="#666"/><rect x="55" y="32" width="1" height="1" fill="#a6a6a6"/><rect x="38" y="15" width="1" height="1" fill="#a6a6a6"/><rect x="2" y="29" width="1" height="1" fill="#787878"/><rect x="10" y="17" width="1" height="1" fill="#666"/><rect x="0" y="16" width="1" height="1" fill="#a6a6a6"/><rect x="21" y="35" width="1" height="1" fill="#a6a6a6"/><rect x="15" y="2" width="1" height="1" fill="#a6a6a6"/><rect x="13" y="22" width="1" height="1" fill="#787878"/></pattern><linearGradient id="shg" x1="0" x2="1" y1="0" y2="0"><stop offset="0" stop-color="#4e4e4e"/><stop offset=".3" stop-color="#5e5e5e"/><stop offset=".42" stop-color="#8a8a8a"/><stop offset=".5" stop-color="#b2b2b2"/><stop offset=".545" stop-color="#9a9a9a"/><stop offset=".56" stop-color="#626262"/><stop offset="1" stop-color="#565656"/></linearGradient><linearGradient id="tsh" x1="0" x2="1" y1="0" y2="0"><stop offset="0" stop-color="#8a8a8a"/><stop offset="1" stop-color="#b4b4b4"/></linearGradient></defs>
<path d="M316 410h16l2 20-3 15 2 20-4 25 1 110v135l-2 133h-12z" fill="#ececec"/><rect x="316" y="738" width="16" height="12" fill="#fafafa"/>
<path d="M314 380.5H1558" stroke="#666" stroke-width="1.1" stroke-dasharray="27 6.3 6.5 6.2" stroke-dashoffset="7.5" opacity=".8"/>
<path d="M314 393.8H1558" stroke="#666" stroke-width="1.1" stroke-dasharray="27 6.3 6.5 6.2" stroke-dashoffset="7.5" opacity=".8"/>
<path d="M314 429.6H1558" stroke="#666" stroke-width="1.1" stroke-dasharray="27 6.3 6.5 6.2" stroke-dashoffset="7.5" opacity=".8"/>
<path d="M314 459.5H1558" stroke="#666" stroke-width="1.1" stroke-dasharray="27 6.3 6.5 6.2" stroke-dashoffset="7.5" opacity=".8"/>
<path d="M314 500.3H1558" stroke="#666" stroke-width="1.1" stroke-dasharray="27 6.3 6.5 6.2" stroke-dashoffset="7.5" opacity=".8"/>
<path d="M314 547.4H1558" stroke="#666" stroke-width="1.1" stroke-dasharray="27 6.3 6.5 6.2" stroke-dashoffset="7.5" opacity=".8"/>
<path d="M314 635.5H1558" stroke="#666" stroke-width="1.1" stroke-dasharray="27 6.3 6.5 6.2" stroke-dashoffset="7.5" opacity=".8"/>
<path d="M314 723.3H1558" stroke="#666" stroke-width="1.1" stroke-dasharray="27 6.3 6.5 6.2" stroke-dashoffset="7.5" opacity=".8"/>
<path d="M314 794.3H1558" stroke="#666" stroke-width="1.1" stroke-dasharray="27 6.3 6.5 6.2" stroke-dashoffset="7.5" opacity=".8"/>
<path d="M314 847.5H1558" stroke="#666" stroke-width="1.1" stroke-dasharray="27 6.3 6.5 6.2" stroke-dashoffset="7.5" opacity=".8"/>
<path d="M314 886H1558" stroke="#666" stroke-width="1.1" stroke-dasharray="27 6.3 6.5 6.2" stroke-dashoffset="7.5" opacity=".8"/>
<rect x="380" y="428" width="668.7" height="431" fill="#dddcdc"/>
<rect x="1123" y="428" width="322" height="459" fill="#dddcdc"/>
<rect x="1123" y="377.5" width="50" height="50" fill="#dedede" stroke="#555" stroke-width=".8"/>
<path d="M404.4 428V858M431.8 428V858M459.3 428V858M486.7 428V858M514.2 428V858M541.6 428V858M569.1 428V858M596.6 428V858M624 428V858M651.5 428V858M679 428V858M706.4 428V858M733.9 428V858M761.3 428V858M788.8 428V858M816.3 428V858M843.7 428V858M871.2 428V858M898.6 428V858M926.1 428V858M953.6 428V858M981 428V858M1008.5 428V858M1035.9 428V858M381 441.4H1040M381 474.4H1040M381 507.4H1040M381 540.4H1040M381 573.4H1040M381 606.4H1040M381 639.4H1040M381 672.4H1040M381 705.4H1040M381 738.4H1040M381 771.4H1040M381 804.4H1040M381 837.4H1040" stroke="#a2a2a2" stroke-width=".65" fill="none"/>
<path d="M1133.9 428V886M1161.6 428V886M1189.2 428V886M1216.9 428V886M1244.5 428V886M1272.2 428V886M1299.8 428V886M1327.5 428V886M1355.1 428V886M1382.8 428V886M1410.4 428V886M1438.1 428V886M1123 441.4H1437M1123 474.4H1437M1123 507.4H1437M1123 540.4H1437M1123 573.4H1437M1123 606.4H1437M1123 639.4H1437M1123 672.4H1437M1123 705.4H1437M1123 738.4H1437M1123 771.4H1437M1123 804.4H1437M1123 837.4H1437M1123 870.4H1437M1148 378V427M1123 408H1173" stroke="#a2a2a2" stroke-width=".65" fill="none"/>
<rect x="1040" y="427" width="9" height="432" fill="url(#tsh)"/>
<rect x="1437" y="428" width="8" height="458" fill="url(#tsh)"/>
<rect x="1048.7" y="377.5" width="74.5" height="494" fill="#77583a"/>
<rect x="1384.6" y="377.5" width="142.4" height="50" fill="#77583a"/>
<rect x="1444.7" y="427" width="82.3" height="459.5" fill="#77583a"/>
<path d="M1399 426L1444.7 381V426z" fill="#3f2a1a"/>
<path d="M1072.5 378V871M1098.2 378V871M1049 408H1123M1049 441.4H1123M1049 474.4H1123M1049 507.4H1123M1049 540.4H1123M1049 573.4H1123M1049 606.4H1123M1049 639.4H1123M1049 672.4H1123M1049 705.4H1123M1049 738.4H1123M1049 771.4H1123M1049 804.4H1123M1049 837.4H1123M1472.5 378V886M1499.8 378V886M1417 378V427M1445 408H1527M1445 441.4H1527M1445 474.4H1527M1445 507.4H1527M1445 540.4H1527M1445 573.4H1527M1445 606.4H1527M1445 639.4H1527M1445 672.4H1527M1445 705.4H1527M1445 738.4H1527M1445 771.4H1527M1445 804.4H1527M1445 837.4H1527M1445 870.4H1527M1385 408H1445" stroke="#a48a66" stroke-width=".7" fill="none" opacity=".8"/>
<rect x="1048.7" y="377" width="74.5" height="2.5" fill="#c8c8c8"/><rect x="1384.6" y="377" width="142.4" height="2.5" fill="#c8c8c8"/>
<path d="M1048.7 377.5V427M1123.2 377.5V871M1444.7 427V886M1527 377.5V886M1384.6 377.5V427" stroke="#3a2a1a" stroke-width=".9"/>
<path d="M371 427.5H1048.7" stroke="#2e2e2e" stroke-width="2.2"/><path d="M1123 427.3H1445" stroke="#2e2e2e" stroke-width="1.8"/><path d="M381 431H1040M1123 430.5H1437" stroke="#777" stroke-width=".7"/>
<rect x="1160.5" y="390" width="3.2" height="37" fill="#666" stroke="#333" stroke-width=".5"/><rect x="1157.5" y="384" width="9" height="8" rx="1.5" fill="#eee" stroke="#555" stroke-width=".8"/>
<rect x="1395.5" y="388" width="2.6" height="39" fill="#777" stroke="#333" stroke-width=".5"/><rect x="1393.5" y="382" width="7" height="6" rx="1.5" fill="#eee" stroke="#555" stroke-width=".8"/>
<rect x="1046" y="385" width="4" height="9" rx="1.5" fill="#ddd" stroke="#555" stroke-width=".7"/><rect x="1442" y="385" width="4" height="9" rx="1.5" fill="#ddd" stroke="#555" stroke-width=".7"/>
<rect x="1064.7" y="452" width="42" height="393" fill="#7a3a22"/><rect x="1065.9" y="453.2" width="39.6" height="391.8" fill="#8aa8d2"/><path d="M1072.2 453V845M1099.2 453V845" stroke="#1c2034" stroke-width="1.8"/><path d="M1066.5 453V845M1104.9 453V845" stroke="#1c2034" stroke-width="1"/><path d="M1065.7 477.5H1105.7" stroke="#1c2034" stroke-width="1.8"/><path d="M1065.7 504.1H1105.7" stroke="#1c2034" stroke-width="1.8"/><path d="M1065.7 530.7H1105.7" stroke="#1c2034" stroke-width="1.8"/><path d="M1065.7 557.3H1105.7" stroke="#1c2034" stroke-width="1.8"/><path d="M1065.7 583.9H1105.7" stroke="#1c2034" stroke-width="1.8"/><path d="M1065.7 610.5H1105.7" stroke="#1c2034" stroke-width="1.8"/><path d="M1065.7 637.1H1105.7" stroke="#1c2034" stroke-width="1.8"/><path d="M1065.7 663.7H1105.7" stroke="#1c2034" stroke-width="1.8"/><path d="M1065.7 690.3H1105.7" stroke="#1c2034" stroke-width="1.8"/><path d="M1065.7 716.9H1105.7" stroke="#1c2034" stroke-width="1.8"/><path d="M1065.7 743.5H1105.7" stroke="#1c2034" stroke-width="1.8"/><path d="M1065.7 770.1H1105.7" stroke="#1c2034" stroke-width="1.8"/><path d="M1065.7 796.7H1105.7" stroke="#1c2034" stroke-width="1.8"/><path d="M1065.7 823.3H1105.7" stroke="#1c2034" stroke-width="1.8"/><path d="M1065.7 453.6H1105.7" stroke="#1c2034" stroke-width="1.2"/>
<rect x="1461.8" y="452" width="42" height="394" fill="#7a3a22"/><rect x="1463" y="453.2" width="39.6" height="392.8" fill="#8aa8d2"/><path d="M1469.3 453V846M1496.3 453V846" stroke="#1c2034" stroke-width="1.8"/><path d="M1463.6 453V846M1502 453V846" stroke="#1c2034" stroke-width="1"/><path d="M1462.8 477.5H1502.8" stroke="#1c2034" stroke-width="1.8"/><path d="M1462.8 504.1H1502.8" stroke="#1c2034" stroke-width="1.8"/><path d="M1462.8 530.7H1502.8" stroke="#1c2034" stroke-width="1.8"/><path d="M1462.8 557.3H1502.8" stroke="#1c2034" stroke-width="1.8"/><path d="M1462.8 583.9H1502.8" stroke="#1c2034" stroke-width="1.8"/><path d="M1462.8 610.5H1502.8" stroke="#1c2034" stroke-width="1.8"/><path d="M1462.8 637.1H1502.8" stroke="#1c2034" stroke-width="1.8"/><path d="M1462.8 663.7H1502.8" stroke="#1c2034" stroke-width="1.8"/><path d="M1462.8 690.3H1502.8" stroke="#1c2034" stroke-width="1.8"/><path d="M1462.8 716.9H1502.8" stroke="#1c2034" stroke-width="1.8"/><path d="M1462.8 743.5H1502.8" stroke="#1c2034" stroke-width="1.8"/><path d="M1462.8 770.1H1502.8" stroke="#1c2034" stroke-width="1.8"/><path d="M1462.8 796.7H1502.8" stroke="#1c2034" stroke-width="1.8"/><path d="M1462.8 823.3H1502.8" stroke="#1c2034" stroke-width="1.8"/><path d="M1462.8 453.6H1502.8" stroke="#1c2034" stroke-width="1.2"/>
<rect x="774.3" y="810.3" width="266" height="37.5" fill="#8a8a8a"/>
<rect x="774.3" y="847.8" width="152" height="10.5" fill="#e6e6e6"/>
<rect x="1000.8" y="847" width="26" height="11" fill="#8a8a8a"/>
<path d="M1026 823L1040.2 810.4H1048.7V845.3L1026 849.8z" fill="#e9e9e9"/>
<rect x="793.9" y="815.3" width="53.3" height="42.5" fill="#0e0e0e"/>
<path d="M794 819H847M794 822.2H847M794 825.4H847M794 828.6H847M794 831.8H847M794 835H847M794 838.2H847M794 841.4H847M794 844.6H847M794 847.8H847M794 851H847M794 854.2H847" stroke="#2c2c2c" stroke-width=".7"/>
<rect x="897.5" y="814.5" width="22" height="44" fill="#8a4226"/><rect x="898.8" y="816" width="20" height="42.5" fill="#1d1d1f"/>
<rect x="932" y="814.5" width="22.5" height="44" fill="#8a4226"/><rect x="933" y="816" width="20" height="42.5" fill="#1d1d1f"/>
<rect x="919.4" y="811" width="12.6" height="47.5" fill="url(#conc)"/><rect x="919.4" y="811" width="12.6" height="47.5" fill="#fff" opacity=".35"/>
<rect x="394.7" y="801" width="33.7" height="47" fill="#878787" stroke="#5a5a5a" stroke-width=".8"/><path d="M394.7 801l33.7 47M428.4 801l-33.7 47" stroke="#5e5e5e" stroke-width=".8"/>
<rect x="1123.3" y="831" width="93.7" height="55.5" fill="#8c8c8c"/><rect x="1123.3" y="870.7" width="55" height="15.8" fill="#dcdcdc"/>
<path d="M371 853L520 853L521 858L1048.7 858L1048.7 871L1123.3 871L1123.3 886.4L1527 886.4L1527 932L371 932z" fill="url(#conc)"/>
<path d="M1051.7 871V932M1123.3 886V932M1449 886V932" stroke="#4a4a4a" stroke-width=".9"/>
<rect x="1437" y="886" width="12" height="6" fill="#6a6a6a"/>
<rect x="371" y="426" width="9.6" height="506" fill="#323232"/>
<path d="M314 849.5L371 851L371 853L314 852z" fill="#bdbdbd"/>
<rect x="381" y="847.5" width="140" height="8.5" fill="#9a9a9a" stroke="#6a6a6a" stroke-width=".6"/>
<path d="M485.8 856L1049 858L1001.6 861L958 877.4L797.5 877.4L772 886.5L608 886.5L593 879L520.4 866.5z" fill="url(#shg)"/>
<path d="M520.4 865.5L531.3 867.5L531.3 870.5L520.4 869z" fill="#ededed"/>
<rect x="1048.7" y="858" width="74.5" height="13" fill="#6a4c30"/>
<path d="M1049 858.2L1558 859.5L1558 867L1049 863.4z" fill="#bcbcbc"/>
<path d="M1393 861L1558 860V866.5L1393 864z" fill="#c9c9c9"/>
<path d="M381 459.5H1527" stroke="#555" stroke-width="1" stroke-dasharray="27 6.3 6.5 6.2" stroke-dashoffset="28.5" opacity=".8"/>
<path d="M381 500.3H1527" stroke="#555" stroke-width="1" stroke-dasharray="27 6.3 6.5 6.2" stroke-dashoffset="28.5" opacity=".8"/>
<path d="M381 547.4H1527" stroke="#555" stroke-width="1" stroke-dasharray="27 6.3 6.5 6.2" stroke-dashoffset="28.5" opacity=".8"/>
<path d="M381 635.5H1527" stroke="#555" stroke-width="1" stroke-dasharray="27 6.3 6.5 6.2" stroke-dashoffset="28.5" opacity=".8"/>
<path d="M381 723.3H1527" stroke="#555" stroke-width="1" stroke-dasharray="27 6.3 6.5 6.2" stroke-dashoffset="28.5" opacity=".8"/>
<path d="M381 794.3H1527" stroke="#555" stroke-width="1" stroke-dasharray="27 6.3 6.5 6.2" stroke-dashoffset="28.5" opacity=".8"/>
<path d="M381 847.5H1527" stroke="#555" stroke-width="1" stroke-dasharray="27 6.3 6.5 6.2" stroke-dashoffset="28.5" opacity=".8"/>
<path d="M1049 393.8H1173" stroke="#555" stroke-width="1" stroke-dasharray="27 6.3 6.5 6.2" stroke-dashoffset="6.5" opacity=".8"/>
<path d="M1385 393.8H1527" stroke="#555" stroke-width="1" stroke-dasharray="27 6.3 6.5 6.2" stroke-dashoffset="20.5" opacity=".8"/>
<path d="M1049 429.6H1123" stroke="#555" stroke-width="1" stroke-dasharray="27 6.3 6.5 6.2" stroke-dashoffset="6.5" opacity=".8"/>
<path d="M1445 429.6H1527" stroke="#555" stroke-width="1" stroke-dasharray="27 6.3 6.5 6.2" stroke-dashoffset="34.5" opacity=".8"/>
<path d="M381 886H1000" stroke="#333" stroke-width="1" stroke-dasharray="27 6.3 6.5 6.2" stroke-dashoffset="28.5" opacity=".9"/>
<rect x="397.6" y="492.8" width="41.5" height="36" fill="#7a3a22"/><rect x="399.2" y="494.4" width="38.3" height="32.8" fill="#1b1d28"/><rect x="400.4" y="495.8" width="17.1" height="30" fill="#8caad2"/><rect x="419.2" y="495.8" width="17.1" height="30" fill="#8caad2"/><path d="M409 495.8v30M427.7 495.8v30" stroke="#3a4660" stroke-width=".7"/><rect x="407" y="509.8" width="4" height="1.8" fill="#111"/>
<rect x="452.4" y="492.8" width="41.5" height="36" fill="#7a3a22"/><rect x="454" y="494.4" width="38.3" height="32.8" fill="#1b1d28"/><rect x="455.2" y="495.8" width="17.1" height="30" fill="#8caad2"/><rect x="473.9" y="495.8" width="17.1" height="30" fill="#8caad2"/><path d="M463.8 495.8v30M482.5 495.8v30" stroke="#3a4660" stroke-width=".7"/><rect x="461.8" y="509.8" width="4" height="1.8" fill="#111"/>
<rect x="671.4" y="492.8" width="41.5" height="36" fill="#7a3a22"/><rect x="673" y="494.4" width="38.3" height="32.8" fill="#1b1d28"/><rect x="674.2" y="495.8" width="17.1" height="30" fill="#8caad2"/><rect x="692.9" y="495.8" width="17.1" height="30" fill="#8caad2"/><path d="M682.8 495.8v30M701.5 495.8v30" stroke="#3a4660" stroke-width=".7"/><rect x="680.8" y="509.8" width="4" height="1.8" fill="#111"/>
<rect x="726.4" y="492.8" width="41.5" height="36" fill="#7a3a22"/><rect x="728" y="494.4" width="38.3" height="32.8" fill="#1b1d28"/><rect x="729.2" y="495.8" width="17.1" height="30" fill="#8caad2"/><rect x="747.9" y="495.8" width="17.1" height="30" fill="#8caad2"/><path d="M737.8 495.8v30M756.5 495.8v30" stroke="#3a4660" stroke-width=".7"/><rect x="735.8" y="509.8" width="4" height="1.8" fill="#111"/>
<rect x="808.4" y="492.8" width="41.5" height="36" fill="#7a3a22"/><rect x="810" y="494.4" width="38.3" height="32.8" fill="#1b1d28"/><rect x="811.2" y="495.8" width="17.1" height="30" fill="#8caad2"/><rect x="829.9" y="495.8" width="17.1" height="30" fill="#8caad2"/><path d="M819.8 495.8v30M838.5 495.8v30" stroke="#3a4660" stroke-width=".7"/><rect x="817.8" y="509.8" width="4" height="1.8" fill="#111"/>
<rect x="863.4" y="492.8" width="41.5" height="36" fill="#7a3a22"/><rect x="865" y="494.4" width="38.3" height="32.8" fill="#1b1d28"/><rect x="866.2" y="495.8" width="17.1" height="30" fill="#8caad2"/><rect x="884.9" y="495.8" width="17.1" height="30" fill="#8caad2"/><path d="M874.8 495.8v30M893.5 495.8v30" stroke="#3a4660" stroke-width=".7"/><rect x="872.8" y="509.8" width="4" height="1.8" fill="#111"/>
<rect x="1182.6" y="492.8" width="41.5" height="36" fill="#7a3a22"/><rect x="1184.2" y="494.4" width="38.3" height="32.8" fill="#1b1d28"/><rect x="1185.4" y="495.8" width="17.1" height="30" fill="#8caad2"/><rect x="1204.1" y="495.8" width="17.1" height="30" fill="#8caad2"/><path d="M1194 495.8v30M1212.7 495.8v30" stroke="#3a4660" stroke-width=".7"/><rect x="1192" y="509.8" width="4" height="1.8" fill="#111"/>
<rect x="1265" y="492.8" width="41.5" height="36" fill="#7a3a22"/><rect x="1266.6" y="494.4" width="38.3" height="32.8" fill="#1b1d28"/><rect x="1267.8" y="495.8" width="17.1" height="30" fill="#8caad2"/><rect x="1286.5" y="495.8" width="17.1" height="30" fill="#8caad2"/><path d="M1276.4 495.8v30M1295.1 495.8v30" stroke="#3a4660" stroke-width=".7"/><rect x="1274.4" y="509.8" width="4" height="1.8" fill="#111"/>
<rect x="1319.7" y="492.8" width="41.5" height="36" fill="#7a3a22"/><rect x="1321.3" y="494.4" width="38.3" height="32.8" fill="#1b1d28"/><rect x="1322.5" y="495.8" width="17.1" height="30" fill="#8caad2"/><rect x="1341.2" y="495.8" width="17.1" height="30" fill="#8caad2"/><path d="M1331.1 495.8v30M1349.8 495.8v30" stroke="#3a4660" stroke-width=".7"/><rect x="1329.1" y="509.8" width="4" height="1.8" fill="#111"/>
<rect x="534.2" y="580.4" width="41.5" height="36" fill="#7a3a22"/><rect x="535.8" y="582" width="38.3" height="32.8" fill="#1b1d28"/><rect x="537" y="583.4" width="17.1" height="30" fill="#8caad2"/><rect x="555.8" y="583.4" width="17.1" height="30" fill="#8caad2"/><path d="M545.6 583.4v30M564.3 583.4v30" stroke="#3a4660" stroke-width=".7"/><rect x="543.6" y="597.4" width="4" height="1.8" fill="#111"/>
<rect x="589.4" y="580.4" width="41.5" height="36" fill="#7a3a22"/><rect x="591" y="582" width="38.3" height="32.8" fill="#1b1d28"/><rect x="592.2" y="583.4" width="17.1" height="30" fill="#8caad2"/><rect x="610.9" y="583.4" width="17.1" height="30" fill="#8caad2"/><path d="M600.8 583.4v30M619.5 583.4v30" stroke="#3a4660" stroke-width=".7"/><rect x="598.8" y="597.4" width="4" height="1.8" fill="#111"/>
<rect x="671.4" y="580.4" width="41.5" height="36" fill="#7a3a22"/><rect x="673" y="582" width="38.3" height="32.8" fill="#1b1d28"/><rect x="674.2" y="583.4" width="17.1" height="30" fill="#8caad2"/><rect x="692.9" y="583.4" width="17.1" height="30" fill="#8caad2"/><path d="M682.8 583.4v30M701.5 583.4v30" stroke="#3a4660" stroke-width=".7"/><rect x="680.8" y="597.4" width="4" height="1.8" fill="#111"/>
<rect x="726.4" y="580.4" width="41.5" height="36" fill="#7a3a22"/><rect x="728" y="582" width="38.3" height="32.8" fill="#1b1d28"/><rect x="729.2" y="583.4" width="17.1" height="30" fill="#8caad2"/><rect x="747.9" y="583.4" width="17.1" height="30" fill="#8caad2"/><path d="M737.8 583.4v30M756.5 583.4v30" stroke="#3a4660" stroke-width=".7"/><rect x="735.8" y="597.4" width="4" height="1.8" fill="#111"/>
<rect x="863.4" y="580.4" width="41.5" height="36" fill="#7a3a22"/><rect x="865" y="582" width="38.3" height="32.8" fill="#1b1d28"/><rect x="866.2" y="583.4" width="17.1" height="30" fill="#8caad2"/><rect x="884.9" y="583.4" width="17.1" height="30" fill="#8caad2"/><path d="M874.8 583.4v30M893.5 583.4v30" stroke="#3a4660" stroke-width=".7"/><rect x="872.8" y="597.4" width="4" height="1.8" fill="#111"/>
<rect x="973.3" y="580.4" width="41.5" height="36" fill="#7a3a22"/><rect x="974.9" y="582" width="38.3" height="32.8" fill="#1b1d28"/><rect x="976.1" y="583.4" width="17.1" height="30" fill="#8caad2"/><rect x="994.8" y="583.4" width="17.1" height="30" fill="#8caad2"/><path d="M984.7 583.4v30M1003.4 583.4v30" stroke="#3a4660" stroke-width=".7"/><rect x="982.7" y="597.4" width="4" height="1.8" fill="#111"/>
<rect x="1182.6" y="580.4" width="41.5" height="36" fill="#7a3a22"/><rect x="1184.2" y="582" width="38.3" height="32.8" fill="#1b1d28"/><rect x="1185.4" y="583.4" width="17.1" height="30" fill="#8caad2"/><rect x="1204.1" y="583.4" width="17.1" height="30" fill="#8caad2"/><path d="M1194 583.4v30M1212.7 583.4v30" stroke="#3a4660" stroke-width=".7"/><rect x="1192" y="597.4" width="4" height="1.8" fill="#111"/>
<rect x="1265" y="580.4" width="41.5" height="36" fill="#7a3a22"/><rect x="1266.6" y="582" width="38.3" height="32.8" fill="#1b1d28"/><rect x="1267.8" y="583.4" width="17.1" height="30" fill="#8caad2"/><rect x="1286.5" y="583.4" width="17.1" height="30" fill="#8caad2"/><path d="M1276.4 583.4v30M1295.1 583.4v30" stroke="#3a4660" stroke-width=".7"/><rect x="1274.4" y="597.4" width="4" height="1.8" fill="#111"/>
<rect x="397" y="670" width="41.5" height="36" fill="#7a3a22"/><rect x="398.6" y="671.6" width="38.3" height="32.8" fill="#1b1d28"/><rect x="399.8" y="673" width="17.1" height="30" fill="#8caad2"/><rect x="418.6" y="673" width="17.1" height="30" fill="#8caad2"/><path d="M408.4 673v30M427.1 673v30" stroke="#3a4660" stroke-width=".7"/><rect x="406.4" y="687" width="4" height="1.8" fill="#111"/>
<rect x="479.4" y="670" width="41.5" height="36" fill="#7a3a22"/><rect x="481" y="671.6" width="38.3" height="32.8" fill="#1b1d28"/><rect x="482.2" y="673" width="17.1" height="30" fill="#8caad2"/><rect x="500.9" y="673" width="17.1" height="30" fill="#8caad2"/><path d="M490.8 673v30M509.5 673v30" stroke="#3a4660" stroke-width=".7"/><rect x="488.8" y="687" width="4" height="1.8" fill="#111"/>
<rect x="534.4" y="670" width="41.5" height="36" fill="#7a3a22"/><rect x="536" y="671.6" width="38.3" height="32.8" fill="#1b1d28"/><rect x="537.2" y="673" width="17.1" height="30" fill="#8caad2"/><rect x="555.9" y="673" width="17.1" height="30" fill="#8caad2"/><path d="M545.8 673v30M564.5 673v30" stroke="#3a4660" stroke-width=".7"/><rect x="543.8" y="687" width="4" height="1.8" fill="#111"/>
<rect x="589" y="670" width="41.5" height="36" fill="#7a3a22"/><rect x="590.6" y="671.6" width="38.3" height="32.8" fill="#1b1d28"/><rect x="591.8" y="673" width="17.1" height="30" fill="#8caad2"/><rect x="610.5" y="673" width="17.1" height="30" fill="#8caad2"/><path d="M600.4 673v30M619.1 673v30" stroke="#3a4660" stroke-width=".7"/><rect x="598.4" y="687" width="4" height="1.8" fill="#111"/>
<rect x="808.5" y="670" width="41.5" height="36" fill="#7a3a22"/><rect x="810.1" y="671.6" width="38.3" height="32.8" fill="#1b1d28"/><rect x="811.3" y="673" width="17.1" height="30" fill="#8caad2"/><rect x="830" y="673" width="17.1" height="30" fill="#8caad2"/><path d="M819.9 673v30M838.6 673v30" stroke="#3a4660" stroke-width=".7"/><rect x="817.9" y="687" width="4" height="1.8" fill="#111"/>
<rect x="863.5" y="670" width="41.5" height="36" fill="#7a3a22"/><rect x="865.1" y="671.6" width="38.3" height="32.8" fill="#1b1d28"/><rect x="866.3" y="673" width="17.1" height="30" fill="#8caad2"/><rect x="885" y="673" width="17.1" height="30" fill="#8caad2"/><path d="M874.9 673v30M893.6 673v30" stroke="#3a4660" stroke-width=".7"/><rect x="872.9" y="687" width="4" height="1.8" fill="#111"/>
<rect x="945.8" y="670" width="41.5" height="36" fill="#7a3a22"/><rect x="947.4" y="671.6" width="38.3" height="32.8" fill="#1b1d28"/><rect x="948.6" y="673" width="17.1" height="30" fill="#8caad2"/><rect x="967.3" y="673" width="17.1" height="30" fill="#8caad2"/><path d="M957.2 673v30M975.9 673v30" stroke="#3a4660" stroke-width=".7"/><rect x="955.2" y="687" width="4" height="1.8" fill="#111"/>
<rect x="1292.6" y="670" width="41.5" height="36" fill="#7a3a22"/><rect x="1294.2" y="671.6" width="38.3" height="32.8" fill="#1b1d28"/><rect x="1295.4" y="673" width="17.1" height="30" fill="#8caad2"/><rect x="1314.1" y="673" width="17.1" height="30" fill="#8caad2"/><path d="M1304 673v30M1322.7 673v30" stroke="#3a4660" stroke-width=".7"/><rect x="1302" y="687" width="4" height="1.8" fill="#111"/>
<rect x="1347.6" y="670" width="41.5" height="36" fill="#7a3a22"/><rect x="1349.2" y="671.6" width="38.3" height="32.8" fill="#1b1d28"/><rect x="1350.4" y="673" width="17.1" height="30" fill="#8caad2"/><rect x="1369.1" y="673" width="17.1" height="30" fill="#8caad2"/><path d="M1359 673v30M1377.7 673v30" stroke="#3a4660" stroke-width=".7"/><rect x="1357" y="687" width="4" height="1.8" fill="#111"/>
<rect x="534" y="736" width="41.5" height="36" fill="#7a3a22"/><rect x="535.6" y="737.6" width="38.3" height="32.8" fill="#1b1d28"/><rect x="536.8" y="739" width="17.1" height="30" fill="#8caad2"/><rect x="555.5" y="739" width="17.1" height="30" fill="#8caad2"/><path d="M545.4 739v30M564.1 739v30" stroke="#3a4660" stroke-width=".7"/><rect x="543.4" y="753" width="4" height="1.8" fill="#111"/>
<rect x="589" y="736" width="41.5" height="36" fill="#7a3a22"/><rect x="590.6" y="737.6" width="38.3" height="32.8" fill="#1b1d28"/><rect x="591.8" y="739" width="17.1" height="30" fill="#8caad2"/><rect x="610.5" y="739" width="17.1" height="30" fill="#8caad2"/><path d="M600.4 739v30M619.1 739v30" stroke="#3a4660" stroke-width=".7"/><rect x="598.4" y="753" width="4" height="1.8" fill="#111"/>
<rect x="781" y="736" width="41.5" height="36" fill="#7a3a22"/><rect x="782.6" y="737.6" width="38.3" height="32.8" fill="#1b1d28"/><rect x="783.8" y="739" width="17.1" height="30" fill="#8caad2"/><rect x="802.5" y="739" width="17.1" height="30" fill="#8caad2"/><path d="M792.4 739v30M811.1 739v30" stroke="#3a4660" stroke-width=".7"/><rect x="790.4" y="753" width="4" height="1.8" fill="#111"/>
<rect x="836" y="736" width="41.5" height="36" fill="#7a3a22"/><rect x="837.6" y="737.6" width="38.3" height="32.8" fill="#1b1d28"/><rect x="838.8" y="739" width="17.1" height="30" fill="#8caad2"/><rect x="857.5" y="739" width="17.1" height="30" fill="#8caad2"/><path d="M847.4 739v30M866.1 739v30" stroke="#3a4660" stroke-width=".7"/><rect x="845.4" y="753" width="4" height="1.8" fill="#111"/>
<rect x="946" y="736" width="41.5" height="36" fill="#7a3a22"/><rect x="947.6" y="737.6" width="38.3" height="32.8" fill="#1b1d28"/><rect x="948.8" y="739" width="17.1" height="30" fill="#8caad2"/><rect x="967.5" y="739" width="17.1" height="30" fill="#8caad2"/><path d="M957.4 739v30M976.1 739v30" stroke="#3a4660" stroke-width=".7"/><rect x="955.4" y="753" width="4" height="1.8" fill="#111"/>
<rect x="1000.8" y="736" width="41.5" height="36" fill="#7a3a22"/><rect x="1002.4" y="737.6" width="38.3" height="32.8" fill="#1b1d28"/><rect x="1003.6" y="739" width="17.1" height="30" fill="#8caad2"/><rect x="1022.3" y="739" width="17.1" height="30" fill="#8caad2"/><path d="M1012.2 739v30M1030.9 739v30" stroke="#3a4660" stroke-width=".7"/><rect x="1010.2" y="753" width="4" height="1.8" fill="#111"/>
<rect x="1226.5" y="753" width="41.5" height="36" fill="#7a3a22"/><rect x="1228.1" y="754.6" width="38.3" height="32.8" fill="#1b1d28"/><rect x="1229.3" y="756" width="17.1" height="30" fill="#8caad2"/><rect x="1248" y="756" width="17.1" height="30" fill="#8caad2"/><path d="M1237.9 756v30M1256.6 756v30" stroke="#3a4660" stroke-width=".7"/><rect x="1235.9" y="770" width="4" height="1.8" fill="#111"/>
<rect x="1281" y="753" width="41.5" height="36" fill="#7a3a22"/><rect x="1282.6" y="754.6" width="38.3" height="32.8" fill="#1b1d28"/><rect x="1283.8" y="756" width="17.1" height="30" fill="#8caad2"/><rect x="1302.5" y="756" width="17.1" height="30" fill="#8caad2"/><path d="M1292.4 756v30M1311.1 756v30" stroke="#3a4660" stroke-width=".7"/><rect x="1290.4" y="770" width="4" height="1.8" fill="#111"/>
<rect x="1336" y="753" width="41.5" height="36" fill="#7a3a22"/><rect x="1337.6" y="754.6" width="38.3" height="32.8" fill="#1b1d28"/><rect x="1338.8" y="756" width="17.1" height="30" fill="#8caad2"/><rect x="1357.5" y="756" width="17.1" height="30" fill="#8caad2"/><path d="M1347.4 756v30M1366.1 756v30" stroke="#3a4660" stroke-width=".7"/><rect x="1345.4" y="770" width="4" height="1.8" fill="#111"/>
<rect x="1390" y="753" width="41.5" height="36" fill="#7a3a22"/><rect x="1391.6" y="754.6" width="38.3" height="32.8" fill="#1b1d28"/><rect x="1392.8" y="756" width="17.1" height="30" fill="#8caad2"/><rect x="1411.5" y="756" width="17.1" height="30" fill="#8caad2"/><path d="M1401.4 756v30M1420.1 756v30" stroke="#3a4660" stroke-width=".7"/><rect x="1399.4" y="770" width="4" height="1.8" fill="#111"/>
<path d="M566.8 549.5H625.8L602.1 573.9H543.1z" fill="#9c9c9c"/><rect x="541.6" y="572.5" width="60.5" height="6.5" fill="#8e8e8e"/><rect x="543.1" y="554.5" width="55.5" height="18.5" fill="#c6c6c6"/><path d="M543.9 554.5v18.5M547.3 554.5v18.5M550.6 554.5v18.5M554 554.5v18.5M557.4 554.5v18.5M560.8 554.5v18.5M564.1 554.5v18.5M567.5 554.5v18.5M570.9 554.5v18.5M574.3 554.5v18.5M577.6 554.5v18.5M581 554.5v18.5M584.4 554.5v18.5M587.8 554.5v18.5M591.1 554.5v18.5M594.5 554.5v18.5M597.9 554.5v18.5M543.1 555H598.6" stroke="#808080" stroke-width="1.1" fill="none"/><path d="M566.8 531L543.1 555.5V573L566.8 550.5z" fill="#c8c8c8"/><path d="M566.8 531L543.1 555.5V573M563.8 534.1V553.3M560.9 537.1V556.1M557.9 540.2V558.9M554.9 543.2V561.8M552 546.3V564.6M549 549.4V567.4M546.1 552.4V570.2" stroke="#7c7c7c" stroke-width=".9" fill="none"/><path d="M567.3 493.5L552.8 541.5" stroke="#777" stroke-width=".6"/><path d="M567.3 489V552.5M625.3 489V552.5" stroke="#2a2a2a" stroke-width="1"/><rect x="566.3" y="488" width="2" height="2" fill="#222"/><rect x="624.3" y="488" width="2" height="2" fill="#222"/><rect x="599.3" y="496.5" width="22" height="49" fill="#8a4226"/><rect x="600.8" y="498.3" width="19" height="47.2" fill="#23252e"/><rect x="602.8" y="500.5" width="15" height="23" fill="#8fb0d6"/><path d="M606.3 504.5l7 14" stroke="#5a78a0" stroke-width=".6" stroke-dasharray="2 2"/><rect x="602.8" y="526.5" width="15" height="17" fill="#3c404c"/><rect x="566.8" y="545.5" width="59" height="7.5" fill="#6e6e6e"/><rect x="566.8" y="545.5" width="59" height="2" fill="#2a2a2a"/><rect x="566.8" y="529.5" width="59" height="17" fill="#444" opacity=".3"/><path d="M566.8 529.5H625.8" stroke="#1a1a1a" stroke-width="1.6"/><path d="M567.8 529.5V545.5" stroke="#1a1a1a" stroke-width="1"/><path d="M571.2 529.5V545.5" stroke="#1a1a1a" stroke-width="1"/><path d="M574.5 529.5V545.5" stroke="#1a1a1a" stroke-width="1"/><path d="M577.9 529.5V545.5" stroke="#1a1a1a" stroke-width="1"/><path d="M581.2 529.5V545.5" stroke="#1a1a1a" stroke-width="1"/><path d="M584.6 529.5V545.5" stroke="#1a1a1a" stroke-width="1"/><path d="M587.9 529.5V545.5" stroke="#1a1a1a" stroke-width="1"/><path d="M591.3 529.5V545.5" stroke="#1a1a1a" stroke-width="1"/><path d="M594.6 529.5V545.5" stroke="#1a1a1a" stroke-width="1"/><path d="M598 529.5V545.5" stroke="#1a1a1a" stroke-width="1"/><path d="M601.3 529.5V545.5" stroke="#1a1a1a" stroke-width="1"/><path d="M604.7 529.5V545.5" stroke="#1a1a1a" stroke-width="1"/><path d="M608 529.5V545.5" stroke="#1a1a1a" stroke-width="1"/><path d="M611.4 529.5V545.5" stroke="#1a1a1a" stroke-width="1"/><path d="M614.7 529.5V545.5" stroke="#1a1a1a" stroke-width="1"/><path d="M618.1 529.5V545.5" stroke="#1a1a1a" stroke-width="1"/><path d="M621.4 529.5V545.5" stroke="#1a1a1a" stroke-width="1"/><path d="M624.8 529.5V545.5" stroke="#1a1a1a" stroke-width="1"/>
<path d="M950.2 549.5H1009.2L985.5 573.9H926.5z" fill="#9c9c9c"/><rect x="925" y="572.5" width="60.5" height="6.5" fill="#8e8e8e"/><rect x="926.5" y="554.5" width="55.5" height="18.5" fill="#c6c6c6"/><path d="M927.3 554.5v18.5M930.7 554.5v18.5M934 554.5v18.5M937.4 554.5v18.5M940.8 554.5v18.5M944.2 554.5v18.5M947.5 554.5v18.5M950.9 554.5v18.5M954.3 554.5v18.5M957.7 554.5v18.5M961 554.5v18.5M964.4 554.5v18.5M967.8 554.5v18.5M971.2 554.5v18.5M974.5 554.5v18.5M977.9 554.5v18.5M981.3 554.5v18.5M926.5 555H982" stroke="#808080" stroke-width="1.1" fill="none"/><path d="M950.2 531L926.5 555.5V573L950.2 550.5z" fill="#c8c8c8"/><path d="M950.2 531L926.5 555.5V573M947.2 534.1V553.3M944.3 537.1V556.1M941.3 540.2V558.9M938.4 543.2V561.8M935.4 546.3V564.6M932.4 549.4V567.4M929.5 552.4V570.2" stroke="#7c7c7c" stroke-width=".9" fill="none"/><path d="M950.7 493.5L936.2 541.5" stroke="#777" stroke-width=".6"/><path d="M950.7 489V552.5M1008.7 489V552.5" stroke="#2a2a2a" stroke-width="1"/><rect x="949.7" y="488" width="2" height="2" fill="#222"/><rect x="1007.7" y="488" width="2" height="2" fill="#222"/><rect x="982.7" y="496.5" width="22" height="49" fill="#8a4226"/><rect x="984.2" y="498.3" width="19" height="47.2" fill="#23252e"/><rect x="986.2" y="500.5" width="15" height="23" fill="#8fb0d6"/><path d="M989.7 504.5l7 14" stroke="#5a78a0" stroke-width=".6" stroke-dasharray="2 2"/><rect x="986.2" y="526.5" width="15" height="17" fill="#3c404c"/><rect x="950.2" y="545.5" width="59" height="7.5" fill="#6e6e6e"/><rect x="950.2" y="545.5" width="59" height="2" fill="#2a2a2a"/><rect x="950.2" y="529.5" width="59" height="17" fill="#444" opacity=".3"/><path d="M950.2 529.5H1009.2" stroke="#1a1a1a" stroke-width="1.6"/><path d="M951.2 529.5V545.5" stroke="#1a1a1a" stroke-width="1"/><path d="M954.6 529.5V545.5" stroke="#1a1a1a" stroke-width="1"/><path d="M957.9 529.5V545.5" stroke="#1a1a1a" stroke-width="1"/><path d="M961.3 529.5V545.5" stroke="#1a1a1a" stroke-width="1"/><path d="M964.6 529.5V545.5" stroke="#1a1a1a" stroke-width="1"/><path d="M968 529.5V545.5" stroke="#1a1a1a" stroke-width="1"/><path d="M971.3 529.5V545.5" stroke="#1a1a1a" stroke-width="1"/><path d="M974.7 529.5V545.5" stroke="#1a1a1a" stroke-width="1"/><path d="M978 529.5V545.5" stroke="#1a1a1a" stroke-width="1"/><path d="M981.4 529.5V545.5" stroke="#1a1a1a" stroke-width="1"/><path d="M984.7 529.5V545.5" stroke="#1a1a1a" stroke-width="1"/><path d="M988.1 529.5V545.5" stroke="#1a1a1a" stroke-width="1"/><path d="M991.4 529.5V545.5" stroke="#1a1a1a" stroke-width="1"/><path d="M994.8 529.5V545.5" stroke="#1a1a1a" stroke-width="1"/><path d="M998.1 529.5V545.5" stroke="#1a1a1a" stroke-width="1"/><path d="M1001.5 529.5V545.5" stroke="#1a1a1a" stroke-width="1"/><path d="M1004.8 529.5V545.5" stroke="#1a1a1a" stroke-width="1"/><path d="M1008.2 529.5V545.5" stroke="#1a1a1a" stroke-width="1"/>
<path d="M430.2 577V640.5M488.2 577V640.5" stroke="#2a2a2a" stroke-width="1"/><rect x="429.2" y="576" width="2" height="2" fill="#222"/><rect x="487.2" y="576" width="2" height="2" fill="#222"/><rect x="462.2" y="584.5" width="22" height="49" fill="#8a4226"/><rect x="463.7" y="586.3" width="19" height="47.2" fill="#23252e"/><rect x="465.7" y="588.5" width="15" height="23" fill="#8fb0d6"/><path d="M469.2 592.5l7 14" stroke="#5a78a0" stroke-width=".6" stroke-dasharray="2 2"/><rect x="465.7" y="614.5" width="15" height="17" fill="#3c404c"/><rect x="429.7" y="633.5" width="59" height="7.5" fill="#6e6e6e"/><rect x="429.7" y="633.5" width="59" height="2" fill="#2a2a2a"/><rect x="429.7" y="617.5" width="59" height="17" fill="#444" opacity=".3"/><path d="M429.7 617.5H488.7" stroke="#1a1a1a" stroke-width="1.6"/><path d="M430.7 617.5V633.5" stroke="#1a1a1a" stroke-width="1"/><path d="M434.1 617.5V633.5" stroke="#1a1a1a" stroke-width="1"/><path d="M437.4 617.5V633.5" stroke="#1a1a1a" stroke-width="1"/><path d="M440.8 617.5V633.5" stroke="#1a1a1a" stroke-width="1"/><path d="M444.1 617.5V633.5" stroke="#1a1a1a" stroke-width="1"/><path d="M447.5 617.5V633.5" stroke="#1a1a1a" stroke-width="1"/><path d="M450.8 617.5V633.5" stroke="#1a1a1a" stroke-width="1"/><path d="M454.2 617.5V633.5" stroke="#1a1a1a" stroke-width="1"/><path d="M457.5 617.5V633.5" stroke="#1a1a1a" stroke-width="1"/><path d="M460.9 617.5V633.5" stroke="#1a1a1a" stroke-width="1"/><path d="M464.2 617.5V633.5" stroke="#1a1a1a" stroke-width="1"/><path d="M467.6 617.5V633.5" stroke="#1a1a1a" stroke-width="1"/><path d="M470.9 617.5V633.5" stroke="#1a1a1a" stroke-width="1"/><path d="M474.3 617.5V633.5" stroke="#1a1a1a" stroke-width="1"/><path d="M477.6 617.5V633.5" stroke="#1a1a1a" stroke-width="1"/><path d="M481 617.5V633.5" stroke="#1a1a1a" stroke-width="1"/><path d="M484.3 617.5V633.5" stroke="#1a1a1a" stroke-width="1"/><path d="M487.7 617.5V633.5" stroke="#1a1a1a" stroke-width="1"/>
<path d="M786.5 577V640.5M844.5 577V640.5" stroke="#2a2a2a" stroke-width="1"/><rect x="785.5" y="576" width="2" height="2" fill="#222"/><rect x="843.5" y="576" width="2" height="2" fill="#222"/><rect x="818.5" y="584.5" width="22" height="49" fill="#8a4226"/><rect x="820" y="586.3" width="19" height="47.2" fill="#23252e"/><rect x="822" y="588.5" width="15" height="23" fill="#8fb0d6"/><path d="M825.5 592.5l7 14" stroke="#5a78a0" stroke-width=".6" stroke-dasharray="2 2"/><rect x="822" y="614.5" width="15" height="17" fill="#3c404c"/><rect x="786" y="633.5" width="59" height="7.5" fill="#6e6e6e"/><rect x="786" y="633.5" width="59" height="2" fill="#2a2a2a"/><rect x="786" y="617.5" width="59" height="17" fill="#444" opacity=".3"/><path d="M786 617.5H845" stroke="#1a1a1a" stroke-width="1.6"/><path d="M787 617.5V633.5" stroke="#1a1a1a" stroke-width="1"/><path d="M790.4 617.5V633.5" stroke="#1a1a1a" stroke-width="1"/><path d="M793.7 617.5V633.5" stroke="#1a1a1a" stroke-width="1"/><path d="M797.1 617.5V633.5" stroke="#1a1a1a" stroke-width="1"/><path d="M800.4 617.5V633.5" stroke="#1a1a1a" stroke-width="1"/><path d="M803.8 617.5V633.5" stroke="#1a1a1a" stroke-width="1"/><path d="M807.1 617.5V633.5" stroke="#1a1a1a" stroke-width="1"/><path d="M810.5 617.5V633.5" stroke="#1a1a1a" stroke-width="1"/><path d="M813.8 617.5V633.5" stroke="#1a1a1a" stroke-width="1"/><path d="M817.2 617.5V633.5" stroke="#1a1a1a" stroke-width="1"/><path d="M820.5 617.5V633.5" stroke="#1a1a1a" stroke-width="1"/><path d="M823.9 617.5V633.5" stroke="#1a1a1a" stroke-width="1"/><path d="M827.2 617.5V633.5" stroke="#1a1a1a" stroke-width="1"/><path d="M830.6 617.5V633.5" stroke="#1a1a1a" stroke-width="1"/><path d="M833.9 617.5V633.5" stroke="#1a1a1a" stroke-width="1"/><path d="M837.3 617.5V633.5" stroke="#1a1a1a" stroke-width="1"/><path d="M840.6 617.5V633.5" stroke="#1a1a1a" stroke-width="1"/><path d="M844 617.5V633.5" stroke="#1a1a1a" stroke-width="1"/>
<path d="M1325 577V640.5M1383 577V640.5" stroke="#2a2a2a" stroke-width="1"/><rect x="1324" y="576" width="2" height="2" fill="#222"/><rect x="1382" y="576" width="2" height="2" fill="#222"/><rect x="1357" y="584.5" width="22" height="49" fill="#8a4226"/><rect x="1358.5" y="586.3" width="19" height="47.2" fill="#23252e"/><rect x="1360.5" y="588.5" width="15" height="23" fill="#8fb0d6"/><path d="M1364 592.5l7 14" stroke="#5a78a0" stroke-width=".6" stroke-dasharray="2 2"/><rect x="1360.5" y="614.5" width="15" height="17" fill="#3c404c"/><rect x="1324.5" y="633.5" width="59" height="7.5" fill="#6e6e6e"/><rect x="1324.5" y="633.5" width="59" height="2" fill="#2a2a2a"/><rect x="1324.5" y="617.5" width="59" height="17" fill="#444" opacity=".3"/><path d="M1324.5 617.5H1383.5" stroke="#1a1a1a" stroke-width="1.6"/><path d="M1325.5 617.5V633.5" stroke="#1a1a1a" stroke-width="1"/><path d="M1328.9 617.5V633.5" stroke="#1a1a1a" stroke-width="1"/><path d="M1332.2 617.5V633.5" stroke="#1a1a1a" stroke-width="1"/><path d="M1335.6 617.5V633.5" stroke="#1a1a1a" stroke-width="1"/><path d="M1338.9 617.5V633.5" stroke="#1a1a1a" stroke-width="1"/><path d="M1342.3 617.5V633.5" stroke="#1a1a1a" stroke-width="1"/><path d="M1345.6 617.5V633.5" stroke="#1a1a1a" stroke-width="1"/><path d="M1349 617.5V633.5" stroke="#1a1a1a" stroke-width="1"/><path d="M1352.3 617.5V633.5" stroke="#1a1a1a" stroke-width="1"/><path d="M1355.7 617.5V633.5" stroke="#1a1a1a" stroke-width="1"/><path d="M1359 617.5V633.5" stroke="#1a1a1a" stroke-width="1"/><path d="M1362.4 617.5V633.5" stroke="#1a1a1a" stroke-width="1"/><path d="M1365.7 617.5V633.5" stroke="#1a1a1a" stroke-width="1"/><path d="M1369.1 617.5V633.5" stroke="#1a1a1a" stroke-width="1"/><path d="M1372.4 617.5V633.5" stroke="#1a1a1a" stroke-width="1"/><path d="M1375.8 617.5V633.5" stroke="#1a1a1a" stroke-width="1"/><path d="M1379.1 617.5V633.5" stroke="#1a1a1a" stroke-width="1"/><path d="M1382.5 617.5V633.5" stroke="#1a1a1a" stroke-width="1"/>
<path d="M676 664.5V728M734 664.5V728" stroke="#2a2a2a" stroke-width="1"/><rect x="675" y="663.5" width="2" height="2" fill="#222"/><rect x="733" y="663.5" width="2" height="2" fill="#222"/><rect x="708" y="672" width="22" height="49" fill="#8a4226"/><rect x="709.5" y="673.8" width="19" height="47.2" fill="#23252e"/><rect x="711.5" y="676" width="15" height="23" fill="#8fb0d6"/><path d="M715 680l7 14" stroke="#5a78a0" stroke-width=".6" stroke-dasharray="2 2"/><rect x="711.5" y="702" width="15" height="17" fill="#3c404c"/><rect x="675.5" y="721" width="59" height="7.5" fill="#6e6e6e"/><rect x="675.5" y="721" width="59" height="2" fill="#2a2a2a"/><rect x="675.5" y="705" width="59" height="17" fill="#444" opacity=".3"/><path d="M675.5 705H734.5" stroke="#1a1a1a" stroke-width="1.6"/><path d="M676.5 705V721" stroke="#1a1a1a" stroke-width="1"/><path d="M679.9 705V721" stroke="#1a1a1a" stroke-width="1"/><path d="M683.2 705V721" stroke="#1a1a1a" stroke-width="1"/><path d="M686.6 705V721" stroke="#1a1a1a" stroke-width="1"/><path d="M689.9 705V721" stroke="#1a1a1a" stroke-width="1"/><path d="M693.3 705V721" stroke="#1a1a1a" stroke-width="1"/><path d="M696.6 705V721" stroke="#1a1a1a" stroke-width="1"/><path d="M700 705V721" stroke="#1a1a1a" stroke-width="1"/><path d="M703.3 705V721" stroke="#1a1a1a" stroke-width="1"/><path d="M706.7 705V721" stroke="#1a1a1a" stroke-width="1"/><path d="M710 705V721" stroke="#1a1a1a" stroke-width="1"/><path d="M713.4 705V721" stroke="#1a1a1a" stroke-width="1"/><path d="M716.7 705V721" stroke="#1a1a1a" stroke-width="1"/><path d="M720.1 705V721" stroke="#1a1a1a" stroke-width="1"/><path d="M723.4 705V721" stroke="#1a1a1a" stroke-width="1"/><path d="M726.8 705V721" stroke="#1a1a1a" stroke-width="1"/><path d="M730.1 705V721" stroke="#1a1a1a" stroke-width="1"/><path d="M733.5 705V721" stroke="#1a1a1a" stroke-width="1"/>
<path d="M1188 664.5V728M1246 664.5V728" stroke="#2a2a2a" stroke-width="1"/><rect x="1187" y="663.5" width="2" height="2" fill="#222"/><rect x="1245" y="663.5" width="2" height="2" fill="#222"/><rect x="1220" y="672" width="22" height="49" fill="#8a4226"/><rect x="1221.5" y="673.8" width="19" height="47.2" fill="#23252e"/><rect x="1223.5" y="676" width="15" height="23" fill="#8fb0d6"/><path d="M1227 680l7 14" stroke="#5a78a0" stroke-width=".6" stroke-dasharray="2 2"/><rect x="1223.5" y="702" width="15" height="17" fill="#3c404c"/><rect x="1187.5" y="721" width="59" height="7.5" fill="#6e6e6e"/><rect x="1187.5" y="721" width="59" height="2" fill="#2a2a2a"/><rect x="1187.5" y="705" width="59" height="17" fill="#444" opacity=".3"/><path d="M1187.5 705H1246.5" stroke="#1a1a1a" stroke-width="1.6"/><path d="M1188.5 705V721" stroke="#1a1a1a" stroke-width="1"/><path d="M1191.9 705V721" stroke="#1a1a1a" stroke-width="1"/><path d="M1195.2 705V721" stroke="#1a1a1a" stroke-width="1"/><path d="M1198.6 705V721" stroke="#1a1a1a" stroke-width="1"/><path d="M1201.9 705V721" stroke="#1a1a1a" stroke-width="1"/><path d="M1205.3 705V721" stroke="#1a1a1a" stroke-width="1"/><path d="M1208.6 705V721" stroke="#1a1a1a" stroke-width="1"/><path d="M1212 705V721" stroke="#1a1a1a" stroke-width="1"/><path d="M1215.3 705V721" stroke="#1a1a1a" stroke-width="1"/><path d="M1218.7 705V721" stroke="#1a1a1a" stroke-width="1"/><path d="M1222 705V721" stroke="#1a1a1a" stroke-width="1"/><path d="M1225.4 705V721" stroke="#1a1a1a" stroke-width="1"/><path d="M1228.7 705V721" stroke="#1a1a1a" stroke-width="1"/><path d="M1232.1 705V721" stroke="#1a1a1a" stroke-width="1"/><path d="M1235.4 705V721" stroke="#1a1a1a" stroke-width="1"/><path d="M1238.8 705V721" stroke="#1a1a1a" stroke-width="1"/><path d="M1242.1 705V721" stroke="#1a1a1a" stroke-width="1"/><path d="M1245.5 705V721" stroke="#1a1a1a" stroke-width="1"/>
<path d="M676 735.5V799M734 735.5V799" stroke="#2a2a2a" stroke-width="1"/><rect x="675" y="734.5" width="2" height="2" fill="#222"/><rect x="733" y="734.5" width="2" height="2" fill="#222"/><rect x="708" y="743" width="22" height="49" fill="#8a4226"/><rect x="709.5" y="744.8" width="19" height="47.2" fill="#23252e"/><rect x="711.5" y="747" width="15" height="23" fill="#8fb0d6"/><path d="M715 751l7 14" stroke="#5a78a0" stroke-width=".6" stroke-dasharray="2 2"/><rect x="711.5" y="773" width="15" height="17" fill="#3c404c"/><rect x="675.5" y="792" width="59" height="7.5" fill="#6e6e6e"/><rect x="675.5" y="792" width="59" height="2" fill="#2a2a2a"/><rect x="675.5" y="776" width="59" height="17" fill="#444" opacity=".3"/><path d="M675.5 776H734.5" stroke="#1a1a1a" stroke-width="1.6"/><path d="M676.5 776V792" stroke="#1a1a1a" stroke-width="1"/><path d="M679.9 776V792" stroke="#1a1a1a" stroke-width="1"/><path d="M683.2 776V792" stroke="#1a1a1a" stroke-width="1"/><path d="M686.6 776V792" stroke="#1a1a1a" stroke-width="1"/><path d="M689.9 776V792" stroke="#1a1a1a" stroke-width="1"/><path d="M693.3 776V792" stroke="#1a1a1a" stroke-width="1"/><path d="M696.6 776V792" stroke="#1a1a1a" stroke-width="1"/><path d="M700 776V792" stroke="#1a1a1a" stroke-width="1"/><path d="M703.3 776V792" stroke="#1a1a1a" stroke-width="1"/><path d="M706.7 776V792" stroke="#1a1a1a" stroke-width="1"/><path d="M710 776V792" stroke="#1a1a1a" stroke-width="1"/><path d="M713.4 776V792" stroke="#1a1a1a" stroke-width="1"/><path d="M716.7 776V792" stroke="#1a1a1a" stroke-width="1"/><path d="M720.1 776V792" stroke="#1a1a1a" stroke-width="1"/><path d="M723.4 776V792" stroke="#1a1a1a" stroke-width="1"/><path d="M726.8 776V792" stroke="#1a1a1a" stroke-width="1"/><path d="M730.1 776V792" stroke="#1a1a1a" stroke-width="1"/><path d="M733.5 776V792" stroke="#1a1a1a" stroke-width="1"/>
<rect x="1084" y="794" width="21" height="51" fill="#1c2034"/><rect x="1086" y="796" width="17" height="47" fill="#9ab8dc"/><path d="M1090 802l9 20" stroke="#5a78a0" stroke-width=".6" stroke-dasharray="2 2"/>
<rect x="1078.8" y="847.5" width="41.5" height="3" fill="#d8d8d8"/>
<path d="M995 886.6L1020 876L1052 868.5L1052 877L971.5 921L968.9 919.5z" fill="#4a4a4a" opacity=".93"/>
<path d="M1078.8 850.5L995 886.6L1003 886.6L1052 868.5L1078.8 853z" fill="#5a5a5a"/>
<path d="M1072 852.5h-9M1061.5 857.1h-9M1051 861.7h-9M1040.5 866.3h-9M1030 870.9h-9M1019.5 875.5h-9M1009 880.1h-9" stroke="#cfcfcf" stroke-width="1.4" fill="none"/>
<path d="M991.5 868.5L1074.3 826H1120.5V847.5H1074.3L991.5 886.6z" fill="#222" opacity=".28"/>
<path d="M991.5 868.5L1074.3 826H1120.5M991.5 871.1L1074.3 828.6H1120.5M991.5 868.5v18M995.6 866.4v18.2M999.8 864.2v18.4M1003.9 862.1v18.5M1008.1 860v18.7M1012.2 857.9v18.9M1016.3 855.8v19.1M1020.5 853.6v19.2M1024.6 851.5v19.4M1028.8 849.4v19.6M1032.9 847.2v19.8M1037 845.1v19.9M1041.2 843v20.1M1045.3 840.9v20.3M1049.5 838.8v20.4M1053.6 836.6v20.6M1057.7 834.5v20.8M1061.9 832.4v21M1066 830.2v21.1M1070.2 828.1v21.3M1074.3 826v21.5M1077.9 826v21.5M1081.4 826v21.5M1085 826v21.5M1088.5 826v21.5M1092.1 826v21.5M1095.6 826v21.5M1099.2 826v21.5M1102.7 826v21.5M1106.3 826v21.5M1109.8 826v21.5M1113.4 826v21.5M1116.9 826v21.5M1120.5 826v21.5M991.5 885.5L1074.3 846.5" stroke="#111" stroke-width="1" fill="none"/>
<path d="M991.5 868.5V886.6M995.5 866.5V886.6M1074.3 826v22M1120.5 826v21.5M1033 847.2v20M1098 826v21.5" stroke="#111" stroke-width="1.7"/>
</svg>
<div style="position:absolute;left:1528px;top:197px;width:30px;height:108px;background:#f8f8f8;border:1px solid #ececec;border-radius:3px"></div>
<svg style="left:1529px;top:198px" width="29" height="106" viewBox="0 0 29 106"><circle cx="24" cy="5" r="2.5" fill="#d4d4d4"/><circle cx="24" cy="100" r="2.5" fill="#d4d4d4"/><circle cx="12" cy="25" r="8" fill="none" stroke="#c4c6ca" stroke-width="1.5"/><circle cx="12" cy="25" r="4" fill="none" stroke="#c4c6ca" stroke-width="1.2"/><text x="15" y="38" font-size="7" font-weight="bold" fill="#8ab4dc" font-family="Liberation Sans,sans-serif">2D</text><path d="M12 46l2.5 3h-5z" fill="#c0c0c0" transform="rotate(180 12 47.5)"/><path d="M2 52h25" stroke="#e0e0e0"/><path d="M7 60h11v10M7 60v12h8" stroke="#c4c6ca" stroke-width="1.4" fill="none"/><circle cx="18" cy="72" r="3.5" fill="none" stroke="#b8bcc2" stroke-width="1.4"/><path d="M20.5 75l3 3" stroke="#b8bcc2" stroke-width="1.5"/><path d="M12 87l2.5 3h-5z" fill="#c0c0c0" transform="rotate(180 12 88.5)"/></svg>
<svg style="left:1561px;top:201px" width="12" height="8" viewBox="0 0 12 8"><path d="M1 7l5-5 5 5" stroke="#c8ccd4" stroke-width="1.8" fill="none"/></svg>
<div style="position:absolute;left:1563px;top:608px;width:8px;height:18px;border-radius:4px;background:#8f9bb0"></div>
<svg style="left:1561px;top:1025px" width="12" height="8" viewBox="0 0 12 8"><path d="M1 1l5 5 5-5" stroke="#c8ccd4" stroke-width="1.8" fill="none"/></svg>
<div class="t " style="left:327px;top:1041px;font-size:11px;color:#e8ebef">1/8" = 1'-0"</div>
<svg style="left:396px;top:1039px" width="18" height="16" viewBox="0 0 18 16"><rect x="1" y="2" width="16" height="12" fill="#e6e8ec"/><path d="M1 2h4v3h4V2h4v3h4v3h-4v3h4v3h-4v-3H9v3H5v-3H1V8h4V5H1z" fill="#8a929e"/></svg>
<svg style="left:421px;top:1039px" width="18" height="16" viewBox="0 0 18 16"><path d="M2 5l3-3h11v9l-3 3H2z" fill="#5ab8e8"/><path d="M2 5h11v9M13 5l3-3" stroke="#bfe4f7" stroke-width="1" fill="none"/></svg>
<svg style="left:447px;top:1039px" width="18" height="16" viewBox="0 0 18 16"><circle cx="8" cy="7" r="3.5" fill="#f4c850"/><path d="M8 0v2M8 12v2M1 7h2M13 7h2M3 2l1.5 1.5M13 2l-1.5 1.5M3 12l1.5-1.5" stroke="#f4c850" stroke-width="1.3"/><circle cx="13.5" cy="12" r="3" fill="#5ab8e8"/></svg>
<svg style="left:471px;top:1039px" width="18" height="16" viewBox="0 0 18 16"><circle cx="7" cy="6" r="5" fill="#e6e8ec"/><path d="M2 12h10l2 3H4z" fill="#9aa0a8"/><circle cx="14" cy="12" r="3" fill="#f4c070"/></svg>
<svg style="left:496px;top:1039px" width="18" height="16" viewBox="0 0 18 16"><path d="M4 1v11h12M1 4h11v11" stroke="#e6e8ec" stroke-width="1.5" fill="none"/><circle cx="13" cy="5" r="2.8" fill="#5ab8e8"/></svg>
<svg style="left:521px;top:1039px" width="18" height="16" viewBox="0 0 18 16"><path d="M4 1v11h12M1 4h11v11" stroke="#e6e8ec" stroke-width="1.5" fill="none" stroke-dasharray="3 1.5"/><circle cx="12" cy="9" r="3.2" fill="#5ab8e8"/></svg>
<svg style="left:546px;top:1039px" width="18" height="16" viewBox="0 0 18 16"><circle cx="4.5" cy="9" r="3.2" fill="none" stroke="#e6e8ec" stroke-width="1.5"/><circle cx="13.5" cy="9" r="3.2" fill="none" stroke="#e6e8ec" stroke-width="1.5"/><path d="M7.5 8.5h3M1.5 8l2-5M16.5 8l-2-5" stroke="#e6e8ec" stroke-width="1.3" fill="none"/></svg>
<svg style="left:571px;top:1039px" width="18" height="16" viewBox="0 0 18 16"><path d="M9 1a5 5 0 0 1 3 9v2H6v-2a5 5 0 0 1 3-9z" fill="#5ab8e8"/><rect x="6.5" y="12.5" width="5" height="2.5" fill="#bfe4f7"/></svg>
<svg style="left:596px;top:1039px" width="18" height="16" viewBox="0 0 18 16"><rect x="2" y="1" width="9" height="11" fill="#e6e8ec"/><path d="M4 4h5M4 7h5" stroke="#6a7484" stroke-width="1"/><path d="M10 8l5 1-2 1 2 3-1.5 1-2-3-1.5 1.5z" fill="#e6e8ec" stroke="#3a4355" stroke-width=".5"/></svg>
<svg style="left:621px;top:1039px" width="18" height="16" viewBox="0 0 18 16"><path d="M2 14V5l5-4 5 4v9M4 14V7M7 14V5M10 14V7" stroke="#e6e8ec" stroke-width="1.3" fill="none"/><rect x="1" y="2" width="3" height="3" fill="#e06a60"/><circle cx="14" cy="11" r="3" fill="#5ab8e8"/></svg>
<svg style="left:646px;top:1039px" width="18" height="16" viewBox="0 0 18 16"><path d="M2 2v10M14 2v6M2 5h12M2 12h3" stroke="#e6e8ec" stroke-width="1.5" fill="none"/><circle cx="13.5" cy="11.5" r="3" fill="#5ab8e8"/></svg>
<svg style="left:672px;top:1042px" width="7" height="10" viewBox="0 0 7 10"><path d="M6 1L2 5l4 4" stroke="#8a93a2" stroke-width="1.5" fill="none"/></svg>
<div style="position:absolute;left:1104px;top:1042px;width:18px;height:8px;border-radius:4px;background:#8f9bb0"></div>
<svg style="left:1547px;top:1041px" width="7" height="11" viewBox="0 0 7 11"><path d="M1 1l4.5 4.5L1 10" stroke="#c8ccd4" stroke-width="1.8" fill="none"/></svg>
<svg style="left:1564px;top:1044px" width="9" height="9" viewBox="0 0 9 9"><rect x="6" y="0" width="2" height="2" fill="#8a93a2"/><rect x="6" y="3" width="2" height="2" fill="#8a93a2"/><rect x="6" y="6" width="2" height="2" fill="#8a93a2"/><rect x="3" y="3" width="2" height="2" fill="#8a93a2"/><rect x="3" y="6" width="2" height="2" fill="#8a93a2"/><rect x="0" y="6" width="2" height="2" fill="#8a93a2"/></svg>
<div id="props" style="font-size:11.8px;position:absolute;left:0;top:174px;width:310px;height:442px;background:#404a5c">
<div class="hdr" style="left:0;top:0;width:311px"></div>
<div class="t " style="left:2px;top:2px;">Properties</div>
<svg style="left:297px;top:3px" width="11" height="11" viewBox="0 0 11 11"><path d="M1 1l9 9M10 1L1 10" stroke="#f0f2f5" stroke-width="1.6"/></svg>
<div style="position:absolute;left:2px;top:18px;width:306px;height:70px;background:#424c5e;border:1px solid #4a5467"></div>
<div style="position:absolute;left:3px;top:19px;width:68px;height:68px;border:1px solid #4a5466"></div>
<svg style="left:23px;top:37px" width="30" height="32" viewBox="0 0 30 32"><path d="M15 1L1 15h28z" fill="#eceef0"/><rect x="6" y="15" width="18" height="14" fill="none" stroke="#eceef0" stroke-width="1.8"/></svg>
<div class="t " style="left:75px;top:38.5px;">Elevation</div>
<div class="t " style="left:75px;top:54.5px;">Interior Elevation</div>
<div class="arr d" style="left:297px;top:52px"></div>
<div class="t " style="left:4px;top:92px;">Elevation: Elevation 1 - a</div>
<svg style="left:229px;top:94px" width="9" height="7" viewBox="0 0 9 7"><path d="M1 1l3.5 4L8 1" stroke="#8a93a2" stroke-width="1.4" fill="none"/></svg>
<svg style="left:245px;top:93px" width="9" height="9" viewBox="0 0 9 9"><rect x="0" y="0" width="4" height="4" fill="#e8ebef"/><rect x="5" y="0" width="4" height="4" fill="#c8ccd2"/><rect x="0" y="5" width="4" height="4" fill="#c8ccd2"/><rect x="5" y="5" width="4" height="4" fill="#e8ebef"/></svg>
<div class="t " style="left:256px;top:91px;">Edit Type</div>
<div style="position:absolute;left:2px;top:108px;width:240px;height:1px;background:#5a6578"></div>
<div style="position:absolute;left:0;top:111px;width:291px;height:18px;background:#222937"></div>
<div class="t " style="left:2px;top:114px;"><b>Graphics</b></div>
<div style="position:absolute;left:286px;top:114px;width:2px;height:4px;background:#c8ccd2"></div>
<div style="position:absolute;left:292px;top:111px;width:16px;height:304px;background:#323b49"></div>
<svg style="left:295px;top:115px" width="10" height="7" viewBox="0 0 10 7"><path d="M1 6l4-4 4 4" stroke="#9aa3b2" stroke-width="1.5" fill="none"/></svg>
<svg style="left:295px;top:404px" width="10" height="7" viewBox="0 0 10 7"><path d="M1 1l4 4 4-4" stroke="#9aa3b2" stroke-width="1.5" fill="none"/></svg>
<div style="position:absolute;left:297px;top:127px;width:6px;height:108px;border-radius:3px;background:#7f8a9c"></div>
<div class="t " style="left:9px;top:132px;width:129px;overflow:hidden">View Scale</div>
<div style="position:absolute;left:140px;top:130px;width:140px;height:18px;border:1px solid #8a93a2;background:#404a5c"></div>
<div class="t " style="left:145px;top:132px;">1/8" = 1'-0"</div>
<div class="t dim" style="left:9px;top:151.07999999999998px;width:129px;overflow:hidden">Scale Value&nbsp;&nbsp;&nbsp; 1:</div>
<div class="t dim" style="left:142px;top:151.07999999999998px;">96</div>
<div class="t " style="left:9px;top:170.15999999999997px;width:129px;overflow:hidden">Display Model</div>
<div class="t " style="left:142px;top:170.15999999999997px;">Normal</div>
<div class="t " style="left:9px;top:189.23999999999995px;width:129px;overflow:hidden">Detail Level</div>
<div class="t " style="left:142px;top:189.23999999999995px;">Medium</div>
<div class="t " style="left:9px;top:208.31999999999994px;width:129px;overflow:hidden">Parts Visibility</div>
<div class="t " style="left:142px;top:208.31999999999994px;">Show Original</div>
<div class="t " style="left:9px;top:227.39999999999992px;width:129px;overflow:hidden">Visibility/Graphics Ove...</div>
<div style="position:absolute;left:140px;top:225.39999999999992px;width:140px;height:18px;border:1px solid #5d687b;background:#434d60"></div>
<div class="t c " style="left:210px;top:227.39999999999992px;">Edit...</div>
<div class="t " style="left:9px;top:246.4799999999999px;width:129px;overflow:hidden">Graphic Display Options</div>
<div style="position:absolute;left:140px;top:244.4799999999999px;width:140px;height:18px;border:1px solid #5d687b;background:#434d60"></div>
<div class="t c " style="left:210px;top:246.4799999999999px;">Edit...</div>
<div class="t " style="left:9px;top:265.5599999999999px;width:129px;overflow:hidden">Hide at scales coarser t...</div>
<div class="t " style="left:142px;top:265.5599999999999px;">&nbsp;1" = 400'-0"</div>
<div class="t " style="left:9px;top:284.6399999999999px;width:129px;overflow:hidden">Discipline</div>
<div class="t " style="left:142px;top:284.6399999999999px;">Coordination</div>
<div class="t " style="left:9px;top:303.71999999999986px;width:129px;overflow:hidden">Show Hidden Lines</div>
<div class="t " style="left:142px;top:303.71999999999986px;">By Discipline</div>
<div class="t " style="left:9px;top:322.79999999999984px;width:129px;overflow:hidden">Color Scheme Location</div>
<div class="t " style="left:142px;top:322.79999999999984px;">Background</div>
<div class="t " style="left:9px;top:341.8799999999998px;width:129px;overflow:hidden">Color Scheme</div>
<div style="position:absolute;left:140px;top:339.8799999999998px;width:140px;height:18px;border:1px solid #5d687b;background:#434d60"></div>
<div class="t c " style="left:210px;top:341.8799999999998px;">&lt;none&gt;</div>
<div class="t " style="left:9px;top:360.9599999999998px;width:129px;overflow:hidden">Default Analysis Displa...</div>
<div class="t " style="left:142px;top:360.9599999999998px;">None</div>
<div class="t " style="left:9px;top:380.0399999999998px;width:129px;overflow:hidden">Sun Path</div>
<div style="position:absolute;left:143px;top:381.0399999999998px;width:11px;height:11px;border:1px solid #c8ccd2"></div>
<div style="position:absolute;left:0;top:398px;width:291px;height:17px;background:#222937"></div>
<div class="t " style="left:2px;top:400.5px;"><b>Extents</b></div>
<div style="position:absolute;left:286px;top:400px;width:2px;height:4px;background:#c8ccd2"></div>
<div style="position:absolute;left:2px;top:417px;width:20px;height:21px;background:#3a6f96;border:1px solid #5a9ac8"></div>
<svg style="left:5px;top:420px" width="14" height="15" viewBox="0 0 14 15"><path d="M1 3h6M1 7h6M1 11h6" stroke="#d8eaf6" stroke-width="1.3" stroke-dasharray="2 1"/><path d="M11 1v3M9.5 2.5h3M11 9v3M9.5 10.5h3" stroke="#d8eaf6" stroke-width="1.2"/></svg>
<div class="t" style="left:28px;top:419px;font-size:7.5px;line-height:8px;height:8px;font-weight:bold;color:#cfe3f2">A</div><div class="t" style="left:28px;top:427px;font-size:7.5px;line-height:8px;height:8px;font-weight:bold;color:#cfe3f2">Z</div>
<svg style="left:34px;top:420px" width="6" height="15" viewBox="0 0 6 15"><path d="M3 0v12M0.5 9.5L3 13l2.5-3.5" stroke="#e8ebef" stroke-width="1.4" fill="none"/></svg>
<div class="t" style="left:51px;top:419px;font-size:7.5px;line-height:8px;height:8px;font-weight:bold;color:#cfe3f2">Z</div><div class="t" style="left:51px;top:427px;font-size:7.5px;line-height:8px;height:8px;font-weight:bold;color:#cfe3f2">A</div>
<svg style="left:57px;top:420px" width="6" height="15" viewBox="0 0 6 15"><path d="M3 0v12M0.5 9.5L3 13l2.5-3.5" stroke="#e8ebef" stroke-width="1.4" fill="none"/></svg>
<div style="position:absolute;left:235px;top:418px;width:73px;height:20px;border:1px solid #4b5567;background:#434d60"></div>
<div class="t c dim" style="left:271px;top:422px;font-size:12.5px">Apply</div>
</div>
<div id="pb" style="font-size:11.75px;position:absolute;left:0;top:616px;width:310px;height:440px;background:#404a5c">
<div class="hdr" style="left:0;top:0;width:311px;height:18px"></div>
<div class="t " style="left:2px;top:2px;">Project Browser - ARCH-ABC-35 Market</div>
<svg style="left:297px;top:3px" width="11" height="11" viewBox="0 0 11 11"><path d="M1 1l9 9M10 1L1 10" stroke="#f0f2f5" stroke-width="1.6"/></svg>
<div style="position:absolute;left:0;top:19px;width:308px;height:22px;background:#232a38"></div>
<div style="position:absolute;left:2px;top:19px;width:23px;height:22px;background:#404a5c"></div>
<svg style="left:5px;top:22px" width="17" height="16" viewBox="0 0 17 16"><path d="M1 8l7.5-7 7.5 7h-2v7H3V8z" fill="#eceef0"/><rect x="6" y="10" width="3" height="5" fill="#6a7484"/><rect x="10" y="10" width="4" height="4" fill="#7ab0e0"/></svg>
<svg style="left:28px;top:22px" width="17" height="16" viewBox="0 0 17 16"><path d="M4 1H1v3M13 1h3v3M4 15H1v-3M13 15h3v-3" stroke="#eceef0" stroke-width="1.5" fill="none"/><path d="M4 6l4-3h6v7l-4 3H4z" fill="#eceef0"/></svg>
<svg style="left:53px;top:22px" width="17" height="16" viewBox="0 0 17 16"><rect x="1" y="1" width="15" height="14" fill="#eceef0"/><rect x="3" y="4" width="4" height="3" fill="#6a7484"/><rect x="9" y="4" width="5" height="3" fill="#6a7484"/><rect x="3" y="9" width="4" height="4" fill="#6a7484"/><rect x="9" y="9" width="5" height="4" fill="#6a7484"/></svg>
<svg style="left:77px;top:22px" width="17" height="16" viewBox="0 0 17 16"><rect x="1" y="2" width="15" height="12" fill="#eceef0"/><path d="M1 6h15M1 10h15M6 2v12" stroke="#404a5c" stroke-width="1.2"/></svg>
<svg style="left:101px;top:22px" width="17" height="16" viewBox="0 0 17 16"><path d="M1 4l8-3 6 8v6H1z" fill="#eceef0"/><circle cx="13" cy="11" r="3" fill="#404a5c" stroke="#eceef0" stroke-width="1.5"/></svg>
<svg style="left:125px;top:22px" width="17" height="16" viewBox="0 0 17 16"><path d="M1 1h6v8h8v6H1z" fill="#eceef0"/><rect x="9" y="1" width="6" height="6" fill="#eceef0"/></svg>
<svg style="left:149px;top:22px" width="17" height="16" viewBox="0 0 17 16"><path d="M4 1H1v14h3M13 1h3v14h-3" stroke="#eceef0" stroke-width="1.5" fill="none"/><circle cx="7" cy="6" r="3.5" fill="#eceef0"/><rect x="7" y="7" width="6" height="6" fill="#eceef0"/></svg>
<svg style="left:173px;top:22px" width="17" height="16" viewBox="0 0 17 16"><g transform="rotate(-38 8.5 8)" fill="none" stroke="#d69a7c" stroke-width="1.45"><rect x="0.5" y="5" width="9.5" height="6" rx="3"/><rect x="7" y="5" width="9.5" height="6" rx="3"/></g></svg>
<div style="position:absolute;left:9px;top:51px;width:292px;height:23px;background:#363f4f"></div>
<svg style="left:16px;top:54px" width="18" height="18" viewBox="0 0 18 18"><circle cx="7" cy="7" r="5.2" fill="none" stroke="#c8ccd4" stroke-width="1.6"/><path d="M11 11l6 6" stroke="#c8ccd4" stroke-width="1.8"/></svg>
<div class="t " style="left:41px;top:56px;color:#8f98a6;font-size:11.5px"><b>Search</b></div>
<div style="position:absolute;left:2px;top:184px;width:306px;height:18px;background:#384151"></div>
<svg style="left:22px;top:85px" width="17" height="16" viewBox="0 0 17 16"><path d="M4 1H1v3M13 1h3v3M4 15H1v-3M13 15h3v-3" stroke="#eceef0" stroke-width="1.4" fill="none"/><path d="M4 6l4-3h6v7l-4 3H4z" fill="#eceef0"/></svg>
<div class="t " style="left:43px;top:86px;">Views (No Grouping)</div>
<div style="position:absolute;left:6px;top:92px;width:8px;height:2px;background:#c8ccd4"></div>
<svg style="left:39px;top:105px" width="16" height="16" viewBox="0 0 16 16"><rect x="2" y="2" width="12" height="12" fill="none" stroke="#eceef0" stroke-width="1.3"/><path d="M0 2h3M0 14h3M13 2h3M13 14h3M2 0v3M14 0v3M2 13v3M14 13v3" stroke="#eceef0" stroke-width="1.3"/></svg>
<div class="t " style="left:60px;top:106px;">3D View: {3D}</div>
<svg style="left:39px;top:125px" width="16" height="16" viewBox="0 0 16 16"><rect x="2" y="2" width="12" height="12" fill="none" stroke="#eceef0" stroke-width="1.3"/><path d="M0 2h3M0 14h3M13 2h3M13 14h3M2 0v3M14 0v3M2 13v3M14 13v3" stroke="#eceef0" stroke-width="1.3"/></svg>
<div class="t " style="left:60px;top:126px;"><b>Elevation: Elevation 1 - a</b></div>
<svg style="left:22px;top:145px" width="16" height="15" viewBox="0 0 16 15"><rect x="0.5" y="0.5" width="15" height="14" fill="#eceef0"/><rect x="3" y="4" width="4" height="3" fill="#6a7484"/><rect x="9" y="4" width="4" height="3" fill="#6a7484"/><rect x="3" y="9" width="4" height="3" fill="#6a7484"/><rect x="9" y="9" width="4" height="3" fill="#6a7484"/></svg>
<div class="t " style="left:42px;top:146px;">Legends</div>
<svg style="left:22px;top:166px" width="16" height="13" viewBox="0 0 16 13"><rect x="0.5" y="0.5" width="15" height="12" fill="#eceef0"/><path d="M0 4.5h16M0 8.5h16M5.5 0v13" stroke="#404a5c" stroke-width="1.1"/></svg>
<div class="t " style="left:42px;top:166px;">Schedules/Quantities (None)</div>
<svg style="left:22px;top:185px" width="17" height="15" viewBox="0 0 17 15"><path d="M1 4l8-3 6 8v5H1z" fill="#eceef0"/><circle cx="13" cy="10.5" r="2.8" fill="#343d4c" stroke="#eceef0" stroke-width="1.4"/></svg>
<div class="t " style="left:42px;top:186px;">Sheets (None)</div>
<svg style="left:23px;top:205px" width="15" height="15" viewBox="0 0 15 15"><path d="M1 1h5v8h8v5H1z" fill="#eceef0"/><rect x="8" y="1" width="6" height="6" fill="#eceef0"/></svg>
<div class="t " style="left:43px;top:206px;">Families</div>
<div style="position:absolute;left:6px;top:212px;width:9px;height:1.5px;background:#c8ccd4"></div><div style="position:absolute;left:10px;top:208px;width:1.5px;height:9px;background:#c8ccd4"></div>
<svg style="left:22px;top:225px" width="16" height="16" viewBox="0 0 16 16"><path d="M4 1H1v14h3M12 1h3v14h-3" stroke="#eceef0" stroke-width="1.4" fill="none"/><circle cx="7" cy="6" r="3.5" fill="#eceef0"/><rect x="7" y="7" width="6" height="6" fill="#eceef0"/></svg>
<div class="t " style="left:43px;top:226px;">Groups</div>
<div style="position:absolute;left:6px;top:232px;width:9px;height:1.5px;background:#c8ccd4"></div><div style="position:absolute;left:10px;top:228px;width:1.5px;height:9px;background:#c8ccd4"></div>
<svg style="left:22px;top:245px" width="17" height="16" viewBox="0 0 17 16"><g transform="rotate(-38 8.5 8)" fill="none" stroke="#d69a7c" stroke-width="1.45"><rect x="0.5" y="5" width="9.5" height="6" rx="3"/><rect x="7" y="5" width="9.5" height="6" rx="3"/></g></svg>
<div class="t " style="left:42px;top:246px;">Revit Links</div>
<svg style="left:8px;top:100px" width="32" height="40" viewBox="0 0 32 40"><path d="M1 0v33M1 13h28M1 33h28" stroke="#566173" stroke-width="1" stroke-dasharray="1 2" fill="none"/></svg>
</div>
<div style="position:absolute;left:1579px;top:174px;width:341px;height:17px;background:#222937"></div>
<div class="t " style="left:1582px;top:177px;">Autodesk Assistant</div>
<svg style="left:1908px;top:177px" width="11" height="11" viewBox="0 0 11 11"><path d="M1 1l9 9M10 1L1 10" stroke="#f0f2f5" stroke-width="1.6"/></svg>
<div id="chat" style="position:absolute;left:1581px;top:191px;width:339px;height:864px;background:#fff;overflow:hidden;color:#555"></div>
<div style="position:absolute;left:1596px;top:233px;width:300px;height:34px;overflow:hidden"><div style="position:absolute;left:2px;top:-20px;width:295px;height:51px;background:#fff;border:1px solid #f0f0f1;border-radius:6px;box-shadow:0 1px 2px rgba(0,0,0,.04)"></div></div>
<svg style="left:1614px;top:231px" width="18" height="18" viewBox="0 0 18 18"><circle cx="9" cy="9" r="7.8" fill="none" stroke="#3c3c3c" stroke-width="1.2"/><text x="9" y="13" text-anchor="middle" font-size="11" fill="#3c3c3c" font-family="Liberation Sans,sans-serif">?</text></svg>
<div class="t" style="left:1643px;top:232px;font-size:12px;color:#444;font-weight:bold;line-height:16px;height:16px;letter-spacing:0.009px;">Where can I find view templates?</div>
<div style="position:absolute;left:1598px;top:273px;width:295px;height:56px;background:#fff;border:1px solid #f0f0f1;border-radius:6px;box-shadow:0 1px 2px rgba(0,0,0,.04)"></div>
<svg style="left:1614px;top:293px" width="18" height="18" viewBox="0 0 18 18"><circle cx="9" cy="9" r="7.8" fill="none" stroke="#3c3c3c" stroke-width="1.2"/><text x="9" y="13" text-anchor="middle" font-size="11" fill="#3c3c3c" font-family="Liberation Sans,sans-serif">?</text></svg>
<div class="t" style="left:1643px;top:286px;font-size:12px;color:#444;font-weight:bold;line-height:16px;height:16px;letter-spacing:-0.014px;">Guide me through setting up sheets and</div>
<div class="t" style="left:1643px;top:302px;font-size:12px;color:#444;font-weight:bold;line-height:16px;height:16px;letter-spacing:-0.005px;">views.</div>
<div style="position:absolute;left:1598px;top:340px;width:295px;height:55px;background:#fff;border:1px solid #f0f0f1;border-radius:6px;box-shadow:0 1px 2px rgba(0,0,0,.04)"></div>
<svg style="left:1614px;top:359px" width="18" height="18" viewBox="0 0 18 18"><circle cx="9" cy="9" r="7.8" fill="none" stroke="#3c3c3c" stroke-width="1.2"/><text x="9" y="13" text-anchor="middle" font-size="11" fill="#3c3c3c" font-family="Liberation Sans,sans-serif">?</text></svg>
<div class="t" style="left:1643px;top:352px;font-size:12px;color:#444;font-weight:bold;line-height:16px;height:16px;letter-spacing:-0.076px;">How many columns are on the ground</div>
<div class="t" style="left:1643px;top:368px;font-size:12px;color:#444;font-weight:bold;line-height:16px;height:16px;letter-spacing:-0.198px;">floor?</div>
<div style="position:absolute;left:1598px;top:406px;width:295px;height:57px;background:#f1f0f3;border:1px solid #f0f0f1;border-radius:6px;box-shadow:0 1px 2px rgba(0,0,0,.04)"></div>
<div class="t" style="left:1611px;top:419px;font-size:13px;color:#5a5a5a;line-height:16px;height:16px;letter-spacing:0.002px;">What's the window to wall ratio on the North</div>
<div class="t" style="left:1611px;top:435px;font-size:13px;color:#5a5a5a;line-height:16px;height:16px;letter-spacing:-0.119px;">facade of my building?</div>
<div style="position:absolute;left:1598px;top:473px;width:295px;height:55px;background:#fff;border:1px solid #f0f0f1;border-radius:6px;box-shadow:0 1px 2px rgba(0,0,0,.04)"></div>
<div class="t" style="left:1611px;top:485px;font-size:13px;color:#5a5a5a;line-height:16px;height:16px;letter-spacing:-0.075px;">I'm testing a few approaches to ensure the</div>
<div class="t" style="left:1611px;top:501px;font-size:13px;color:#5a5a5a;line-height:16px;height:16px;letter-spacing:0.016px;">best solution for you.</div>
<div style="position:absolute;left:1598px;top:539px;width:295px;height:168px;background:#fff;border:1px solid #f0f0f1;border-radius:6px;box-shadow:0 1px 2px rgba(0,0,0,.04)"></div>
<div class="t" style="left:1611px;top:551px;font-size:14.5px;font-weight:bold;color:#3a3a3a;line-height:16px;height:16px;letter-spacing:-0.601px;">Results:</div>
<div style="position:absolute;left:1615px;top:581.5px;width:4px;height:4px;border-radius:2px;background:#444"></div>
<div class="t" style="left:1627px;top:575.5px;font-size:13px;color:#5a5a5a;line-height:16px;height:16px;letter-spacing:0.044px;">Calculated window-to-wall ratio on the</div>
<div class="t" style="left:1627px;top:591.5px;font-size:13px;color:#5a5a5a;line-height:16px;height:16px;letter-spacing:-0.094px;">north facade based on external walls:</div>
<div style="position:absolute;left:1615px;top:615.5px;width:4px;height:4px;border-radius:2px;background:#444"></div>
<div class="t" style="left:1627px;top:609.5px;font-size:13px;color:#5a5a5a;line-height:16px;height:16px;letter-spacing:-0.294px;">Total Wall Area: 12443.883464608962</div>
<div class="t" style="left:1627px;top:625.5px;font-size:13px;color:#5a5a5a;line-height:16px;height:16px;letter-spacing:0.075px;">(internal area units)</div>
<div style="position:absolute;left:1615px;top:649.5px;width:4px;height:4px;border-radius:2px;background:#444"></div>
<div class="t" style="left:1627px;top:643.5px;font-size:13px;color:#5a5a5a;line-height:16px;height:16px;letter-spacing:-0.128px;">Total Window Area on north Walls:</div>
<div class="t" style="left:1627px;top:659.5px;font-size:13px;color:#5a5a5a;line-height:16px;height:16px;letter-spacing:-0.15px;">2325.8070162480485 (internal area units)</div>
<div style="position:absolute;left:1615px;top:683.5px;width:4px;height:4px;border-radius:2px;background:#444"></div>
<div class="t" style="left:1627px;top:677.5px;font-size:13px;color:#5a5a5a;line-height:16px;height:16px;letter-spacing:-0.207px;">Window-to-Wall Ratio: 18.7%</div>
<div style="position:absolute;left:1598px;top:718px;width:295px;height:72px;background:#f1f0f3;border:1px solid #f0f0f1;border-radius:6px;box-shadow:0 1px 2px rgba(0,0,0,.04)"></div>
<div class="t" style="left:1611px;top:730px;font-size:13px;color:#5a5a5a;line-height:16px;height:16px;letter-spacing:-0.128px;">Replace all windows in the North facade of my</div>
<div class="t" style="left:1611px;top:746px;font-size:13px;color:#5a5a5a;line-height:16px;height:16px;letter-spacing:0.045px;">building with windows of family "Window-</div>
<div class="t" style="left:1611px;top:762px;font-size:13px;color:#5a5a5a;line-height:16px;height:16px;letter-spacing:-0.151px;">Double-Hung-Double" 68" x 62"</div>
<div style="position:absolute;left:1598px;top:800px;width:295px;height:56px;background:#fff;border:1px solid #f0f0f1;border-radius:6px;box-shadow:0 1px 2px rgba(0,0,0,.04)"></div>
<div class="t" style="left:1611px;top:812px;font-size:13px;color:#5a5a5a;line-height:16px;height:16px;letter-spacing:-0.078px;">I'm testing a few approaches to ensure the</div>
<div class="t" style="left:1611px;top:828px;font-size:13px;color:#5a5a5a;line-height:16px;height:16px;letter-spacing:0.016px;">best solution for you.</div>
<div style="position:absolute;left:1598px;top:866px;width:295px;height:98px;background:#fff;border:1px solid #f0f0f1;border-radius:6px;box-shadow:0 1px 2px rgba(0,0,0,.04)"></div>
<div class="t" style="left:1611px;top:878px;font-size:14.5px;font-weight:bold;color:#3a3a3a;line-height:16px;height:16px;letter-spacing:-0.601px;">Results:</div>
<div style="position:absolute;left:1615px;top:908.5px;width:4px;height:4px;border-radius:2px;background:#444"></div>
<div class="t" style="left:1627px;top:902.5px;font-size:13px;color:#5a5a5a;line-height:16px;height:16px;letter-spacing:-0.057px;">Replaced 36 window(s) with family</div>
<div class="t" style="left:1627px;top:918.5px;font-size:13px;color:#5a5a5a;line-height:16px;height:16px;letter-spacing:-0.062px;">'Window-Double-Hung-Double' and type</div>
<div class="t" style="left:1627px;top:934.5px;font-size:13px;color:#5a5a5a;line-height:16px;height:16px;letter-spacing:-0.284px;">'68" x 62"'</div>
<div style="position:absolute;left:1582px;top:193px;width:330px;height:40px;background:#fff"></div>
<div class="t" style="left:1598px;top:212px;font-size:12.5px;color:#3a3a3a;line-height:16px;height:16px;-webkit-text-stroke:.3px #3a3a3a;">Chat</div>
<div style="position:absolute;left:1598px;top:231.5px;width:120px;height:1px;background:#c8c8c8"></div>
<div style="position:absolute;left:1694px;top:215.5px;width:7px;height:7px;border-radius:4px;background:#f2a33a"></div>
<div class="arr" style="left:1714px;top:217.5px;border-top-color:#999;border-left-width:3px;border-right-width:3px;border-top-width:3.5px"></div>
<svg style="left:1853px;top:211px" width="16" height="16" viewBox="0 0 16 16"><path d="M7 3l1.5 3.5L12 8l-3.5 1.5L7 13 5.5 9.5 2 8l3.5-1.5z" fill="none" stroke="#444" stroke-width="1.2" stroke-linejoin="round"/><path d="M12.5 1.5v3M11 3h3" stroke="#444" stroke-width="1.1"/></svg>
<svg style="left:1885px;top:213px" width="12" height="12" viewBox="0 0 12 12"><path d="M6 0v12M0 6h12" stroke="#555" stroke-width="1.3"/></svg>
<div style="position:absolute;left:1912px;top:352px;width:6px;height:634px;border-radius:3px;background:#e6e2e8"></div>
<div style="position:absolute;left:1595px;top:1003px;width:312px;height:34px;border:2px solid #2b7fa8;border-radius:6px;background:#fff"></div>
<div class="t" style="left:1607px;top:1012px;font-size:12.5px;color:#666;line-height:16px;height:16px;letter-spacing:0.183px;">Ask a question or select a prompt to get</div>
<div style="position:absolute;left:1607px;top:1011px;width:1px;height:17px;background:#333"></div>
<div style="position:absolute;left:1849px;top:1013px;width:5px;height:13px;border-radius:2px;background:#ebebee"></div>
<svg style="left:1870px;top:1010px" width="22" height="19" viewBox="0 0 22 19"><path d="M2 1.5L20 9.5 2 17.5 6.5 9.5z" fill="none" stroke="#333" stroke-width="1.5" stroke-linejoin="round"/><path d="M6.5 9.5H13" stroke="#333" stroke-width="1.3"/></svg>
<svg style="left:1689px;top:1002px" width="20" height="39" viewBox="0 0 20 39"><path d="M2 2h6.5l1.5 1.5L11.5 2H18M2 37h6.5l1.5-1.5 1.5 1.5H18M10 3.5v32" stroke="#000" stroke-width="3.2" fill="none"/></svg>
<div style="position:absolute;left:0;top:1055px;width:1920px;height:23px;background:#404a5c;border-top:1px solid #2e3848"></div>
<div class="t " style="left:1px;top:1064px;font-size:12.06px">Coordination Model : Coordination Model : 4ba88162-e72e-4901-b446-1e25081ad74a3f07f4ba-32d0-4e5e-b4e6-19394a8c7124 : 33</div>
<svg style="left:1011px;top:1060px" width="18" height="17" viewBox="0 0 18 17"><rect x="1" y="3" width="6" height="11" rx="1" fill="#5aa8e0"/><rect x="6" y="1" width="6" height="11" rx="1" fill="#e8eaee"/><path d="M8 8l6 7 3-9z" fill="#4ac0a0"/><circle cx="5" cy="13" r="2.5" fill="#f0c050"/></svg>
<svg style="left:1226px;top:1066px" width="8" height="6" viewBox="0 0 8 6"><path d="M1 1l3 3 3-3" stroke="#5a6474" stroke-width="1.3" fill="none"/></svg>
<svg style="left:1242px;top:1060px" width="20" height="17" viewBox="0 0 20 17"><path d="M3 12l3-8h5l2 8z" fill="#9aa2ae"/><rect x="1" y="12" width="13" height="3" fill="#7a8290"/><text x="13" y="16" font-size="9" fill="#c8ccd4" font-family="Liberation Sans,sans-serif">:0</text></svg>
<svg style="left:1278px;top:1062px" width="16" height="14" viewBox="0 0 16 14"><rect x="0" y="0" width="16" height="14" fill="#e6e8ec"/><path d="M2 3.5h2M6 3.5h8M2 7h2M6 7h8M2 10.5h2M6 10.5h8" stroke="#404a5c" stroke-width="1.4"/></svg>
<svg style="left:1300px;top:1061px" width="17" height="15" viewBox="0 0 17 15"><rect x="3" y="0" width="13" height="11" fill="#b0b6c0"/><path d="M5 3h9M5 5.5h9M5 8h9" stroke="#404a5c" stroke-width="1"/><path d="M0 13h12l3-2H3z" fill="#8a93a2"/></svg>
<div class="t " style="left:1322px;top:1064px;color:#8a93a2;font-size:12.4px">Main Model</div>
<svg style="left:1513px;top:1066px" width="8" height="6" viewBox="0 0 8 6"><path d="M1 1l3 3 3-3" stroke="#5a6474" stroke-width="1.3" fill="none"/></svg>
<svg style="left:1741px;top:1061px" width="18" height="16" viewBox="0 0 18 16"><path d="M2 3a2 2 0 0 1 4 0M5 3a2 2 0 0 1 4 0" stroke="#e09a68" stroke-width="1.6" fill="none"/><path d="M8 3l0 11 2.5-2.5 2 4 1.8-1-2-4h3.5z" fill="#e6e8ec"/></svg>
<svg style="left:1763px;top:1061px" width="18" height="16" viewBox="0 0 18 16"><path d="M1 9l5-6 4 3-3 6z" fill="#6aa8e0"/><path d="M9 1l4 4M13 1l-4 4" stroke="#e05a50" stroke-width="1.6"/><path d="M8 3l0 11 2.5-2.5 2 4 1.8-1-2-4h3.5z" fill="#e6e8ec"/></svg>
<svg style="left:1785px;top:1061px" width="18" height="16" viewBox="0 0 18 16"><path d="M2 2h8l-2 4h-4z" fill="#b0b6c0"/><path d="M3 6h6v2H3z" fill="#8a93a2"/><path d="M8 3l0 11 2.5-2.5 2 4 1.8-1-2-4h3.5z" fill="#e6e8ec"/></svg>
<svg style="left:1807px;top:1061px" width="18" height="16" viewBox="0 0 18 16"><path d="M2 14V5l4-3 3 3v9z" fill="#6aa8e0"/><path d="M10 1l4 4M14 1l-4 4" stroke="#e05a50" stroke-width="1.6"/><path d="M8 3l0 11 2.5-2.5 2 4 1.8-1-2-4h3.5z" fill="#e6e8ec"/></svg>
<svg style="left:1829px;top:1061px" width="18" height="16" viewBox="0 0 18 16"><path d="M6 1v10M1 6h10" stroke="#e6e8ec" stroke-width="1.5"/><path d="M6 0l-2 2.5h4zM6 12l-2-2.5h4zM0 6l2.5-2v4zM12 6l-2.5-2v4z" fill="#e6e8ec"/><path d="M8 3l0 11 2.5-2.5 2 4 1.8-1-2-4h3.5z" fill="#e6e8ec"/></svg>
<svg style="left:1851px;top:1061px" width="18" height="16" viewBox="0 0 18 16"><circle cx="9" cy="8" r="6" fill="none" stroke="#6a7484" stroke-width="2.2" stroke-dasharray="2.5 2"/></svg>
<svg style="left:1870px;top:1061px" width="18" height="16" viewBox="0 0 18 16"><path d="M1 2h14l-5.5 6v6l-3-2V8z" fill="#b0b6c0"/></svg>
<div class="t " style="left:1889px;top:1066px;font-size:9px;color:#c8ccd4">:0</div>
<div style="position:absolute;left:1881.5px;top:1042px;width:29px;height:29px;border-radius:15px;background:#2a2f38"></div>
<svg style="left:1887.5px;top:1048px" width="17" height="17" viewBox="0 0 17 17"><path d="M1 5V3a2 2 0 0 1 2-2h2M12 1h2a2 2 0 0 1 2 2v2M16 12v2a2 2 0 0 1-2 2h-2M5 16H3a2 2 0 0 1-2-2v-2" stroke="#f0f2f5" stroke-width="1.5" fill="none"/><path d="M5 6h7M5 8.5h7M5 11h4" stroke="#f0f2f5" stroke-width="1.3"/></svg>
</div></body></html>
